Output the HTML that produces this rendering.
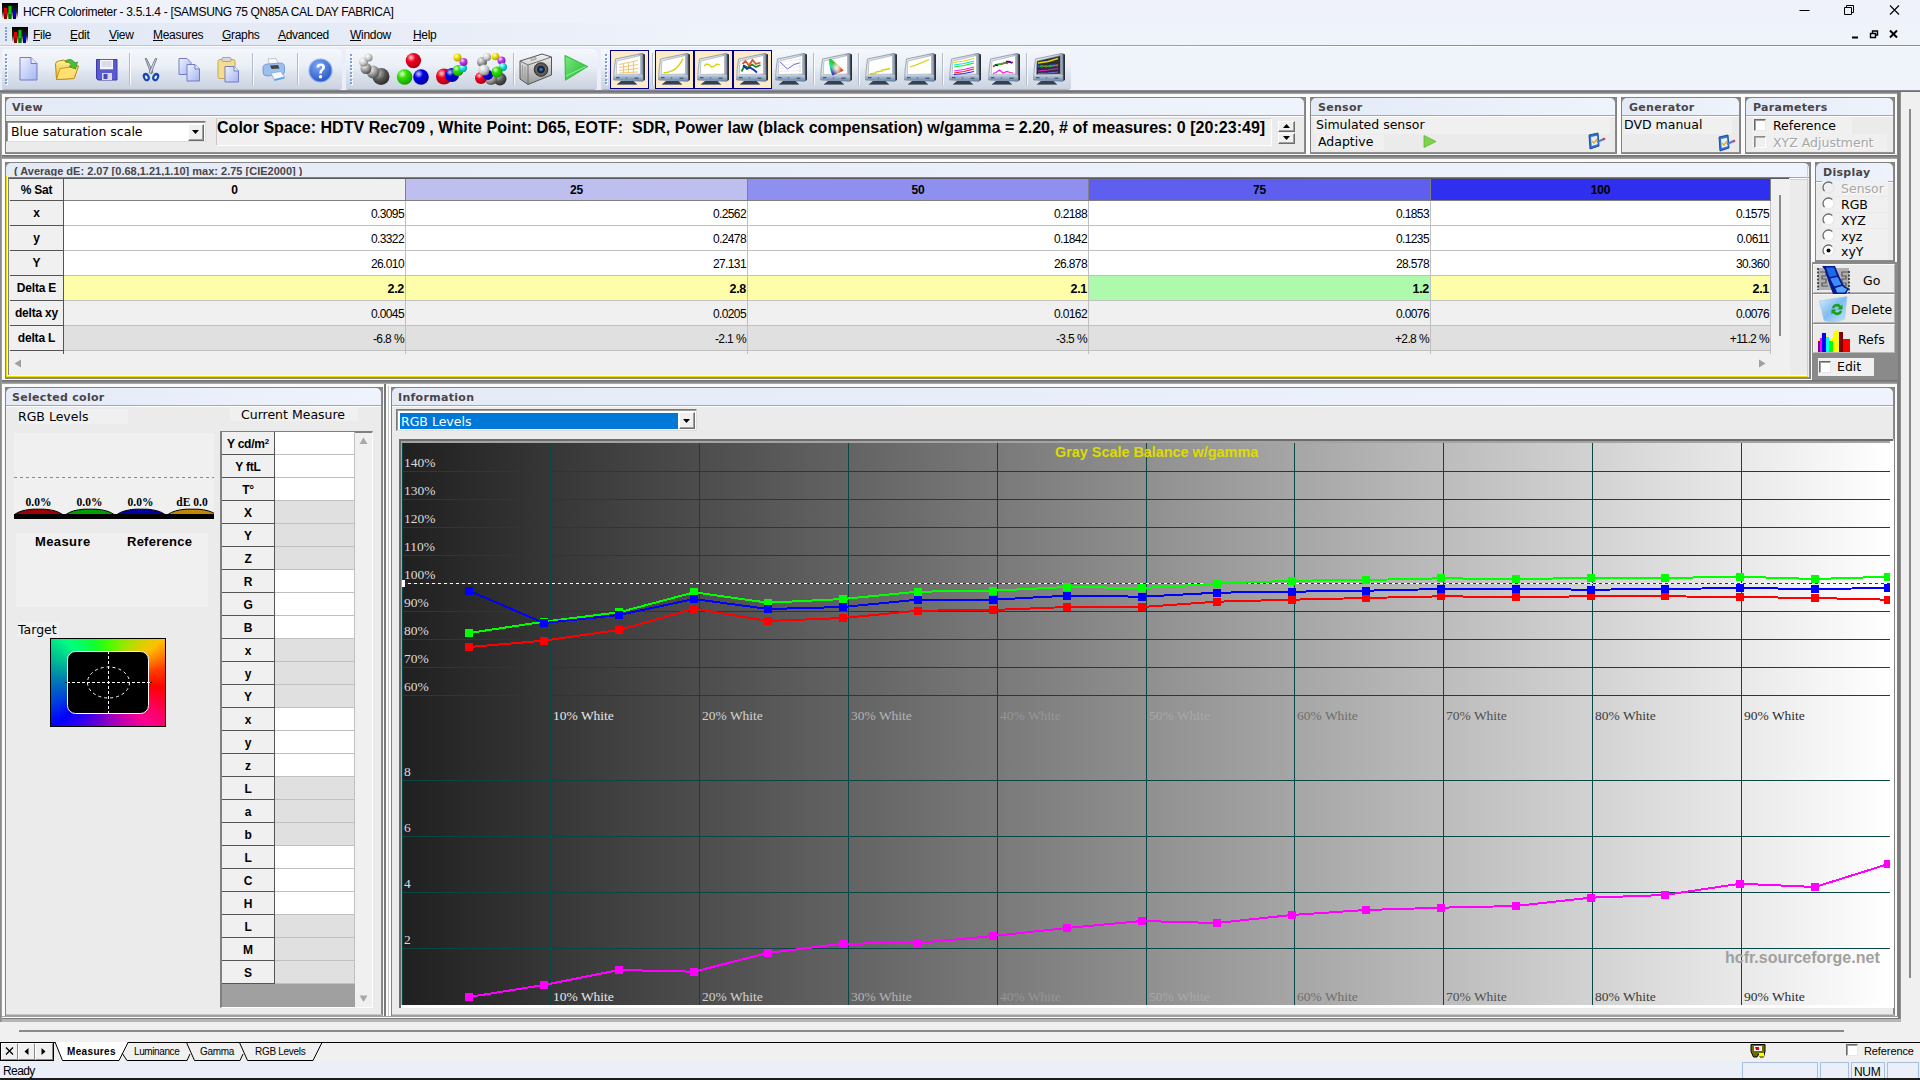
<!DOCTYPE html><html><head><meta charset="utf-8"><title>HCFR Colorimeter</title><style>
*{box-sizing:border-box;margin:0;padding:0}
html,body{width:1920px;height:1080px;overflow:hidden;background:#f0f0f0}
body{position:relative;font-family:"Liberation Sans",sans-serif;font-size:12px;color:#000}
.a{position:absolute}
.t{position:absolute;white-space:nowrap;line-height:1}
.ui{font-family:"Liberation Sans",sans-serif;font-size:12px;letter-spacing:-0.3px}
.th{font-family:"DejaVu Sans","Liberation Sans",sans-serif;font-size:12.5px}
.pt{font-family:"DejaVu Sans","Liberation Sans",sans-serif;font-weight:bold;font-size:11px;letter-spacing:0.3px;color:#4a4446}
.pnl{position:absolute;background:#838383}
.pnl .hd{position:absolute;left:1px;top:1px;right:2px;height:17px;background:linear-gradient(90deg,#e4ebf7,#eff3fb);border-radius:5px 5px 0 0}
.pnl .bd{position:absolute;left:1px;top:19px;right:2px;bottom:2px;background:#ebebeb;border-top:1px solid #a6a6a6;box-shadow:inset 0 1px 0 #fff}
.pnl .br{position:absolute;right:1px;top:1px;bottom:1px;width:1px;background:#8a8a8a}
.pnl .bb{position:absolute;left:1px;right:1px;bottom:1px;height:1px;background:#8f8f8f}
.hl{position:absolute;height:4px;background:linear-gradient(#6c6c6c,#8c8c8c 60%,#b0b0b0)}
.vl{position:absolute;width:3px;background:linear-gradient(90deg,#a8a8a8,#7c7c7c 50%,#8e8e8e)}
.cell{position:absolute;white-space:nowrap;overflow:hidden}
.serif{font-family:"Liberation Serif",serif}
</style></head><body>
<div class="a" style="left:0px;top:0px;width:1920px;height:23px;background:#eff2fa"></div>
<div class="a" style="left:0px;top:23px;width:1920px;height:23px;background:linear-gradient(90deg,#e3e9f5 0,#e5ebf6 320px,#eff3fa 720px)"></div>
<div class="a" style="left:0px;top:46px;width:1920px;height:45px;background:linear-gradient(90deg,#e8eef8 0,#eaeff9 600px,#eff3fa 1100px)"></div>
<div class="a" style="left:0px;top:45px;width:1920px;height:1px;background:linear-gradient(90deg,#c4cad6 0,#a8acb4 900px,#8e8e8e 1500px)"></div>
<div class="a" style="left:0px;top:46px;width:1920px;height:1px;background:#fafcff"></div>
<div class="a" style="left:0px;top:94px;width:1920px;height:948px;background:#fbfbfb"></div>
<svg class="a" style="left:2px;top:3px" width="16" height="16" viewBox="0 0 16 16"><defs><linearGradient id="ig2" x1="0" y1="0" x2="0" y2="1"><stop offset="0" stop-color="#000"/><stop offset=".55" stop-color="#222"/><stop offset="1" stop-color="#fff"/></linearGradient></defs><rect x="0" y="0" width="16" height="16" fill="url(#ig2)"/><rect x="2" y="5" width="3" height="11" fill="#e00000"/><rect x="2" y="11" width="3" height="5" fill="#900000"/><rect x="6.5" y="3" width="3" height="13" fill="#00c800"/><rect x="6.5" y="11" width="3" height="5" fill="#007000"/><rect x="11" y="6" width="3" height="10" fill="#0000e8"/><rect x="11" y="12" width="3" height="4" fill="#000090"/></svg>
<div class="t ui" style="left:23px;top:6px;letter-spacing:-0.32px">HCFR Colorimeter - 3.5.1.4 - [SAMSUNG 75 QN85A CAL DAY FABRICA]</div>
<svg class="a" style="left:1780px;top:0" width="140" height="46" viewBox="0 0 140 46"><path d="M19.5 10.5h10" stroke="#000" stroke-width="1" fill="none"/><path d="M64.5 7.500h7v7h-7z M66.500 7.500v-2h7v7h-2" stroke="#000" stroke-width="1" fill="none"/><path d="M110 5.500l9 9M119 5.500l-9 9" stroke="#000" stroke-width="1.1" fill="none"/><path d="M72 37.500h6" stroke="#000" stroke-width="2" fill="none"/><path d="M90.500 33.500h5v4h-5z M92.500 33v-2h5v4h-2" stroke="#000" stroke-width="1.4" fill="none"/><path d="M110 30.500l7 7M117 30.500l-7 7" stroke="#000" stroke-width="2" fill="none"/></svg>
<div class="a" style="left:5px;top:27px;width:2px;height:2px;background:#7f9fd0"></div>
<div class="a" style="left:5px;top:30px;width:2px;height:2px;background:#7f9fd0"></div>
<div class="a" style="left:5px;top:33px;width:2px;height:2px;background:#7f9fd0"></div>
<div class="a" style="left:5px;top:36px;width:2px;height:2px;background:#7f9fd0"></div>
<div class="a" style="left:5px;top:39px;width:2px;height:2px;background:#7f9fd0"></div>
<svg class="a" style="left:12px;top:27px" width="16" height="16" viewBox="0 0 16 16"><defs><linearGradient id="ig12" x1="0" y1="0" x2="0" y2="1"><stop offset="0" stop-color="#000"/><stop offset=".55" stop-color="#222"/><stop offset="1" stop-color="#fff"/></linearGradient></defs><rect x="0" y="0" width="16" height="16" fill="url(#ig12)"/><rect x="2" y="5" width="3" height="11" fill="#e00000"/><rect x="2" y="11" width="3" height="5" fill="#900000"/><rect x="6.5" y="3" width="3" height="13" fill="#00c800"/><rect x="6.5" y="11" width="3" height="5" fill="#007000"/><rect x="11" y="6" width="3" height="10" fill="#0000e8"/><rect x="11" y="12" width="3" height="4" fill="#000090"/></svg>
<div class="t ui" style="left:33px;top:29px;">File</div>
<div class="a" style="left:33px;top:40px;width:7px;height:1px;background:#000"></div>
<div class="t ui" style="left:70px;top:29px;">Edit</div>
<div class="a" style="left:70px;top:40px;width:7px;height:1px;background:#000"></div>
<div class="t ui" style="left:109px;top:29px;">View</div>
<div class="a" style="left:109px;top:40px;width:7.5px;height:1px;background:#000"></div>
<div class="t ui" style="left:153px;top:29px;">Measures</div>
<div class="a" style="left:153px;top:40px;width:10px;height:1px;background:#000"></div>
<div class="t ui" style="left:222px;top:29px;">Graphs</div>
<div class="a" style="left:222px;top:40px;width:9px;height:1px;background:#000"></div>
<div class="t ui" style="left:278px;top:29px;">Advanced</div>
<div class="a" style="left:278px;top:40px;width:7.5px;height:1px;background:#000"></div>
<div class="t ui" style="left:350px;top:29px;">Window</div>
<div class="a" style="left:350px;top:40px;width:11px;height:1px;background:#000"></div>
<div class="t ui" style="left:413px;top:29px;">Help</div>
<div class="a" style="left:413px;top:40px;width:8px;height:1px;background:#000"></div>
<div class="a" style="left:2px;top:49px;width:340px;height:40px;background:linear-gradient(#f4f7fb 0%,#eaeff6 45%,#dfe5ef 60%,#cbd3e0 100%);border-radius:2px 4px 4px 2px;box-shadow:0 1px 0 #aab4c4"></div>
<div class="a" style="left:5px;top:54.0px;width:2px;height:2px;background:#7f9fd2;box-shadow:1px 1px 0 #fff"></div>
<div class="a" style="left:5px;top:57.5px;width:2px;height:2px;background:#7f9fd2;box-shadow:1px 1px 0 #fff"></div>
<div class="a" style="left:5px;top:61.0px;width:2px;height:2px;background:#7f9fd2;box-shadow:1px 1px 0 #fff"></div>
<div class="a" style="left:5px;top:64.5px;width:2px;height:2px;background:#7f9fd2;box-shadow:1px 1px 0 #fff"></div>
<div class="a" style="left:5px;top:68.0px;width:2px;height:2px;background:#7f9fd2;box-shadow:1px 1px 0 #fff"></div>
<div class="a" style="left:5px;top:71.5px;width:2px;height:2px;background:#7f9fd2;box-shadow:1px 1px 0 #fff"></div>
<div class="a" style="left:5px;top:75.0px;width:2px;height:2px;background:#7f9fd2;box-shadow:1px 1px 0 #fff"></div>
<div class="a" style="left:5px;top:78.5px;width:2px;height:2px;background:#7f9fd2;box-shadow:1px 1px 0 #fff"></div>
<div class="a" style="left:5px;top:82.0px;width:2px;height:2px;background:#7f9fd2;box-shadow:1px 1px 0 #fff"></div>
<div class="a" style="left:346px;top:49px;width:251px;height:40px;background:linear-gradient(#f4f7fb 0%,#eaeff6 45%,#dfe5ef 60%,#cbd3e0 100%);border-radius:2px 4px 4px 2px;box-shadow:0 1px 0 #aab4c4"></div>
<div class="a" style="left:350px;top:54.0px;width:2px;height:2px;background:#7f9fd2;box-shadow:1px 1px 0 #fff"></div>
<div class="a" style="left:350px;top:57.5px;width:2px;height:2px;background:#7f9fd2;box-shadow:1px 1px 0 #fff"></div>
<div class="a" style="left:350px;top:61.0px;width:2px;height:2px;background:#7f9fd2;box-shadow:1px 1px 0 #fff"></div>
<div class="a" style="left:350px;top:64.5px;width:2px;height:2px;background:#7f9fd2;box-shadow:1px 1px 0 #fff"></div>
<div class="a" style="left:350px;top:68.0px;width:2px;height:2px;background:#7f9fd2;box-shadow:1px 1px 0 #fff"></div>
<div class="a" style="left:350px;top:71.5px;width:2px;height:2px;background:#7f9fd2;box-shadow:1px 1px 0 #fff"></div>
<div class="a" style="left:350px;top:75.0px;width:2px;height:2px;background:#7f9fd2;box-shadow:1px 1px 0 #fff"></div>
<div class="a" style="left:350px;top:78.5px;width:2px;height:2px;background:#7f9fd2;box-shadow:1px 1px 0 #fff"></div>
<div class="a" style="left:350px;top:82.0px;width:2px;height:2px;background:#7f9fd2;box-shadow:1px 1px 0 #fff"></div>
<div class="a" style="left:601px;top:49px;width:470px;height:40px;background:linear-gradient(#f4f7fb 0%,#eaeff6 45%,#dfe5ef 60%,#cbd3e0 100%);border-radius:2px 4px 4px 2px;box-shadow:0 1px 0 #aab4c4"></div>
<div class="a" style="left:605px;top:54.0px;width:2px;height:2px;background:#7f9fd2;box-shadow:1px 1px 0 #fff"></div>
<div class="a" style="left:605px;top:57.5px;width:2px;height:2px;background:#7f9fd2;box-shadow:1px 1px 0 #fff"></div>
<div class="a" style="left:605px;top:61.0px;width:2px;height:2px;background:#7f9fd2;box-shadow:1px 1px 0 #fff"></div>
<div class="a" style="left:605px;top:64.5px;width:2px;height:2px;background:#7f9fd2;box-shadow:1px 1px 0 #fff"></div>
<div class="a" style="left:605px;top:68.0px;width:2px;height:2px;background:#7f9fd2;box-shadow:1px 1px 0 #fff"></div>
<div class="a" style="left:605px;top:71.5px;width:2px;height:2px;background:#7f9fd2;box-shadow:1px 1px 0 #fff"></div>
<div class="a" style="left:605px;top:75.0px;width:2px;height:2px;background:#7f9fd2;box-shadow:1px 1px 0 #fff"></div>
<div class="a" style="left:605px;top:78.5px;width:2px;height:2px;background:#7f9fd2;box-shadow:1px 1px 0 #fff"></div>
<div class="a" style="left:605px;top:82.0px;width:2px;height:2px;background:#7f9fd2;box-shadow:1px 1px 0 #fff"></div>
<div class="a" style="left:129px;top:53px;width:1px;height:32px;background:#b4bccb;box-shadow:1px 0 0 #fafbfd"></div>
<div class="a" style="left:252px;top:53px;width:1px;height:32px;background:#b4bccb;box-shadow:1px 0 0 #fafbfd"></div>
<div class="a" style="left:297px;top:53px;width:1px;height:32px;background:#b4bccb;box-shadow:1px 0 0 #fafbfd"></div>
<div class="a" style="left:513px;top:53px;width:1px;height:32px;background:#b4bccb;box-shadow:1px 0 0 #fafbfd"></div>
<div class="a" style="left:652px;top:53px;width:1px;height:32px;background:#b4bccb;box-shadow:1px 0 0 #fafbfd"></div>
<div class="a" style="left:813px;top:53px;width:1px;height:32px;background:#b4bccb;box-shadow:1px 0 0 #fafbfd"></div>
<div class="a" style="left:858px;top:53px;width:1px;height:32px;background:#b4bccb;box-shadow:1px 0 0 #fafbfd"></div>
<div class="a" style="left:942px;top:53px;width:1px;height:32px;background:#b4bccb;box-shadow:1px 0 0 #fafbfd"></div>
<div class="a" style="left:1026px;top:53px;width:1px;height:32px;background:#b4bccb;box-shadow:1px 0 0 #fafbfd"></div>
<svg class="a" width="0" height="0"><defs><linearGradient id="gdoc" x1="0" y1="0" x2="1" y2="1"><stop offset="0" stop-color="#f0f3ff"/><stop offset="1" stop-color="#a4b4f0"/></linearGradient><linearGradient id="gfold" x1="0" y1="0" x2="0" y2="1"><stop offset="0" stop-color="#fff3a0"/><stop offset="1" stop-color="#e8b020"/></linearGradient><radialGradient id="bgray" cx=".35" cy=".3" r=".8"><stop offset="0" stop-color="#f4f4f4"/><stop offset=".5" stop-color="#9a9a9a"/><stop offset="1" stop-color="#3c3c3c"/></radialGradient><radialGradient id="bdk" cx=".35" cy=".3" r=".8"><stop offset="0" stop-color="#bbb"/><stop offset=".5" stop-color="#555"/><stop offset="1" stop-color="#222"/></radialGradient><radialGradient id="bred" cx=".35" cy=".3" r=".8"><stop offset="0" stop-color="#ffd0d0"/><stop offset=".35" stop-color="#f00020"/><stop offset="1" stop-color="#a00010"/></radialGradient><radialGradient id="bgrn" cx=".35" cy=".3" r=".8"><stop offset="0" stop-color="#e0ffd0"/><stop offset=".35" stop-color="#30e000"/><stop offset="1" stop-color="#109000"/></radialGradient><radialGradient id="bblu" cx=".35" cy=".3" r=".8"><stop offset="0" stop-color="#d0d0ff"/><stop offset=".35" stop-color="#0000e8"/><stop offset="1" stop-color="#000090"/></radialGradient><radialGradient id="byel" cx=".35" cy=".3" r=".8"><stop offset="0" stop-color="#ffffd0"/><stop offset=".4" stop-color="#f0e000"/><stop offset="1" stop-color="#a09000"/></radialGradient><radialGradient id="bmag" cx=".35" cy=".3" r=".8"><stop offset="0" stop-color="#ffe0ff"/><stop offset=".4" stop-color="#c040e0"/><stop offset="1" stop-color="#7010a0"/></radialGradient><radialGradient id="bcya" cx=".35" cy=".3" r=".8"><stop offset="0" stop-color="#e0ffff"/><stop offset=".4" stop-color="#20e0e0"/><stop offset="1" stop-color="#009090"/></radialGradient><radialGradient id="bwht" cx=".35" cy=".3" r=".8"><stop offset="0" stop-color="#fff"/><stop offset=".55" stop-color="#c8c8c8"/><stop offset="1" stop-color="#6a6a6a"/></radialGradient><linearGradient id="gmon" x1="0" y1="0" x2="1" y2="0"><stop offset="0" stop-color="#e4e9ef"/><stop offset=".8" stop-color="#cfd7e1"/><stop offset="1" stop-color="#8e9aac"/></linearGradient><linearGradient id="gchin" x1="0" y1="0" x2="0" y2="1"><stop offset="0" stop-color="#c2d0e2"/><stop offset="1" stop-color="#6482a8"/></linearGradient><linearGradient id="gmons" x1="0" y1="0" x2="1" y2="0"><stop offset="0" stop-color="#5a6270"/><stop offset="1" stop-color="#1e2228"/></linearGradient><linearGradient id="gcam" x1="0" y1="0" x2="0" y2="1"><stop offset="0" stop-color="#f4f4f4"/><stop offset="1" stop-color="#9a9a9a"/></linearGradient><linearGradient id="gplay" x1="0" y1="0" x2="1" y2="1"><stop offset="0" stop-color="#7fe87f"/><stop offset="1" stop-color="#18b830"/></linearGradient><radialGradient id="ghelp" cx=".4" cy=".3" r=".8"><stop offset="0" stop-color="#7fa8f4"/><stop offset="1" stop-color="#1c4cc0"/></radialGradient></defs></svg>
<svg class="a" style="left:19px;top:57px" width="19" height="24" viewBox="0 0 19 24"><path d="M1 0.500h11l6 6v16.500h-17z" fill="url(#gdoc)" stroke="#707cc6" stroke-width="1"/><path d="M12 0.500v6h6" fill="#e6eaff" stroke="#707cc6" stroke-width="1"/></svg>
<svg class="a" style="left:54px;top:58px" width="26" height="23" viewBox="0 0 26 23"><path d="M1.500 6 Q2 3 5 3 L10 2 L12 4.500 L20 3.500 L21 8 L24.500 8 L20 20.500 L2.500 21.500z" fill="url(#gfold)" stroke="#b88a10" stroke-width="1"/><path d="M2.500 21.500 L6 10.500 L24.500 8 L20 20.500z" fill="#ffe070" stroke="#b88a10" stroke-width=".8"/><path d="M11 3 Q17 -1 21 5 L23.500 4 L21.500 11 L15 8.500 L17.500 7 Q15 3.500 11 3z" fill="#48c038" stroke="#2a8a20" stroke-width=".7"/></svg>
<svg class="a" style="left:96px;top:59px" width="22" height="22" viewBox="0 0 22 22"><path d="M0.500 0.500h20.500v20.500h-19l-1.500-1.500z" fill="#5a5ad0" stroke="#3a3aa8" stroke-width="1"/><rect x="4" y="0.800" width="13" height="9.500" fill="#f4f4fa"/><path d="M5.500 3h10M5.500 5h10M5.500 7h10" stroke="#b8b8c8" stroke-width=".8"/><rect x="6" y="14" width="10" height="7" fill="#d8d8e4"/><rect x="7.500" y="15" width="4" height="5" fill="#4848b8"/></svg>
<svg class="a" style="left:142px;top:58px" width="18" height="24" viewBox="0 0 18 24"><path d="M3.200 0.500 L4.600 0.500 L11 14.500 L9 15.500z" fill="#c8ccd6" stroke="#505868" stroke-width=".7"/><path d="M14.800 0.500 L13.400 0.500 L7 14.500 L9 15.500z" fill="#e0e4ea" stroke="#505868" stroke-width=".7"/><ellipse cx="4.300" cy="19" rx="3.300" ry="4.300" fill="#1448b8" transform="rotate(-25 4.300 19)"/><ellipse cx="4.300" cy="19.300" rx="1.200" ry="2" fill="#e8eef8" transform="rotate(-25 4.300 19.300)"/><ellipse cx="13.700" cy="19" rx="3.300" ry="4.300" fill="#1448b8" transform="rotate(25 13.700 19)"/><ellipse cx="13.700" cy="19.300" rx="1.200" ry="2" fill="#e8eef8" transform="rotate(25 13.700 19.300)"/></svg>
<svg class="a" style="left:178px;top:58px" width="23" height="24" viewBox="0 0 23 24"><path d="M1 0.500h8l4 4v12h-12z" fill="url(#gdoc)" stroke="#707cc6" stroke-width="1"/><path d="M9 6.500h8l4.500 4.500v12h-12.500z" fill="url(#gdoc)" stroke="#707cc6" stroke-width="1"/><path d="M17 6.500v4.500h4.500" fill="#e6eaff" stroke="#707cc6" stroke-width="1"/></svg>
<svg class="a" style="left:217px;top:57px" width="23" height="26" viewBox="0 0 23 26"><rect x="1" y="2.500" width="17" height="19" rx="2" fill="#f4dc90" stroke="#c8a848" stroke-width="1"/><rect x="5" y="0.500" width="9" height="4" rx="1" fill="#d8d8d8" stroke="#999" stroke-width=".8"/><path d="M8 9.500h9l4.500 4.500v11h-13.500z" fill="url(#gdoc)" stroke="#707cc6" stroke-width="1"/><path d="M17 9.500v4.500h4.500" fill="#e6eaff" stroke="#707cc6" stroke-width="1"/></svg>
<svg class="a" style="left:262px;top:58px" width="24" height="24" viewBox="0 0 24 24"><path d="M6 1 L14 0.500 L17 7 L8 8z" fill="#fff" stroke="#a8b8d8" stroke-width=".8"/><path d="M1 10 Q1 6 6 6 L18 5 Q22.500 5 22.500 9 L22.500 14 Q22 17 18 17 L5 18 Q1 18 1 14z" fill="#9cc0ee" stroke="#6a90cc" stroke-width=".8"/><path d="M8 7.500 L16 7 L17.500 10.500 L9.500 11z" fill="#444"/><path d="M9 15 L19 13.500 L22.500 19 L12 21.500z" fill="#f4f8ff" stroke="#88a8d8" stroke-width=".8"/><path d="M12 21.500 L22.500 19 L22.500 20.500 L12.500 23z" fill="#58a0e8"/></svg>
<svg class="a" style="left:308px;top:58px" width="25" height="25" viewBox="0 0 25 25"><circle cx="12.500" cy="12.500" r="11.500" fill="url(#ghelp)" stroke="#8fb0ee" stroke-width="1.200"/><path d="M8.500 9.500 Q8.500 5.500 12.700 5.500 Q17 5.500 17 9.300 Q17 11.500 14.800 12.800 Q13.800 13.500 13.800 15.500 L11.200 15.500 Q11.200 12.500 13 11.300 Q14.200 10.500 14.200 9.400 Q14.200 7.800 12.700 7.800 Q11.200 7.800 11.200 9.500z" fill="#fff"/><circle cx="12.500" cy="18.700" r="1.700" fill="#fff"/></svg>
<svg class="a" style="left:357px;top:53px" width="34" height="33" viewBox="0 0 34 33"><circle cx="24" cy="23.500" r="8.500" fill="url(#bdk)"/><circle cx="16" cy="19" r="6.500" fill="url(#bgray)"/><circle cx="9" cy="15.500" r="5.500" fill="url(#bgray)"/><circle cx="6.500" cy="9" r="4.500" fill="url(#bwht)"/><circle cx="11.500" cy="4.500" r="4" fill="url(#bwht)"/></svg>
<svg class="a" style="left:396px;top:52px" width="34" height="34" viewBox="0 0 34 34"><circle cx="17.400" cy="8.600" r="7.700" fill="url(#bred)"/><circle cx="8.600" cy="25" r="7.800" fill="url(#bgrn)"/><circle cx="25" cy="25" r="7.800" fill="url(#bblu)"/></svg>
<svg class="a" style="left:435px;top:53px" width="34" height="33" viewBox="0 0 34 33"><circle cx="9" cy="23.500" r="8" fill="url(#bred)"/><circle cx="17" cy="22" r="7" fill="url(#bblu)"/><circle cx="23" cy="17.500" r="5.500" fill="url(#bgrn)"/><circle cx="28" cy="15" r="4.200" fill="url(#bcya)"/><circle cx="28.500" cy="9" r="4" fill="url(#bmag)"/><circle cx="22.500" cy="4.500" r="4" fill="url(#byel)"/></svg>
<svg class="a" style="left:475px;top:53px" width="34" height="33" viewBox="0 0 34 33"><circle cx="25" cy="26" r="6.500" fill="url(#bdk)"/><circle cx="16" cy="26" r="6" fill="url(#bgray)"/><circle cx="6" cy="25" r="6" fill="url(#bred)"/><circle cx="13" cy="22" r="5" fill="url(#bblu)"/><circle cx="7" cy="9" r="5" fill="url(#bgray)"/><circle cx="9" cy="17" r="5.500" fill="url(#bwht)"/><circle cx="12" cy="4" r="4" fill="url(#bwht)"/><circle cx="20.500" cy="3.500" r="3.800" fill="url(#byel)"/><circle cx="26.500" cy="7.500" r="4" fill="url(#bmag)"/><circle cx="28" cy="14" r="4.200" fill="url(#bcya)"/><circle cx="22" cy="19" r="5.500" fill="url(#bgrn)"/></svg>
<svg class="a" style="left:519px;top:53px" width="34" height="32" viewBox="0 0 34 32"><path d="M1 8 L20 2 L23 1 L28 2.500 L32.500 4 L32.500 22 L9 31.500 L1 26z" fill="url(#gcam)" stroke="#555" stroke-width="1"/><path d="M1 8 L9 12 L9 31.500 M9 12 L32.500 4" fill="none" stroke="#666" stroke-width=".9"/><path d="M3.500 12v13M6 13.500v13" stroke="#999" stroke-width=".9"/><circle cx="22" cy="16.500" r="6.800" fill="#555" stroke="#333" stroke-width="1"/><circle cx="22" cy="16.500" r="4.500" fill="#222" stroke="#888" stroke-width=".8"/><circle cx="22" cy="16.500" r="1.800" fill="#2070e0"/><rect x="12" y="4.500" width="5" height="2.500" fill="#ccc" stroke="#777" stroke-width=".5" transform="rotate(-16 14 6)"/></svg>
<svg class="a" style="left:563px;top:54px" width="26" height="28" viewBox="0 0 26 28"><path d="M2 1.500 L24.500 12.500 L2.500 26z" fill="url(#gplay)" stroke="#38c048" stroke-width="1.200" stroke-linejoin="round"/><path d="M3 22 L23 12.500" stroke="#b8f4b8" stroke-width="1" opacity=".8"/></svg>
<div class="a" style="left:610px;top:50px;width:39px;height:39px;background:#fdebc8;border:1px solid #00008b"></div>
<svg class="a" style="left:613px;top:53px" width="32" height="32" viewBox="0 0 32 32"><path d="M29.400 0.300 L32 1.600 L32 27 L29.800 28.300z" fill="url(#gmons)"/><path d="M2.500 6 L29.400 0.300 L29.800 28.300 L0.600 27 Q0.800 16 2.500 6z" fill="url(#gmon)" stroke="#7a8798" stroke-width=".7"/><path d="M1 22.300 L29.700 22 L29.800 28.300 L0.600 27z" fill="url(#gchin)"/><path d="M4 8 L27.500 2.500 L27.500 21 L3.300 21.500 Q3.400 14 4 8z" fill="#fff" stroke="#98a4b4" stroke-width=".6"/><rect x="3" y="24" width="3.500" height="1.300" fill="#4a5a70"/><rect x="21.500" y="24.600" width="4" height="1.300" fill="#4a5a70"/><circle cx="13.500" cy="25" r=".8" fill="#5a6a80"/><path d="M8 28 L20.500 28 L24 31.300 L4 31.300z" fill="#36404e"/><path d="M4 31.300h20v.7h-20z" fill="#5a6472"/><g stroke="#f0c878" stroke-width="1.100" fill="none"><path d="M6 11.500 L25 7.500M6 14.500 L25 11.500M6 17.500 L25 15.500M6 20 L25 19"/><path d="M10.500 10v10.500M15.500 9v11.500M20.500 8v12.500"/></g></svg>
<div class="a" style="left:655px;top:50px;width:39px;height:39px;background:#fdebc8;border:1px solid #00008b"></div>
<svg class="a" style="left:658px;top:53px" width="32" height="32" viewBox="0 0 32 32"><path d="M29.400 0.300 L32 1.600 L32 27 L29.800 28.300z" fill="url(#gmons)"/><path d="M2.500 6 L29.400 0.300 L29.800 28.300 L0.600 27 Q0.800 16 2.500 6z" fill="url(#gmon)" stroke="#7a8798" stroke-width=".7"/><path d="M1 22.300 L29.700 22 L29.800 28.300 L0.600 27z" fill="url(#gchin)"/><path d="M4 8 L27.500 2.500 L27.500 21 L3.300 21.500 Q3.400 14 4 8z" fill="#fff" stroke="#98a4b4" stroke-width=".6"/><rect x="3" y="24" width="3.500" height="1.300" fill="#4a5a70"/><rect x="21.500" y="24.600" width="4" height="1.300" fill="#4a5a70"/><circle cx="13.500" cy="25" r=".8" fill="#5a6a80"/><path d="M8 28 L20.500 28 L24 31.300 L4 31.300z" fill="#36404e"/><path d="M4 31.300h20v.7h-20z" fill="#5a6472"/><path d="M5.500 20 Q16 19 21 12 Q24 8 25 5.500" stroke="#d8d000" stroke-width="1.300" fill="none"/></svg>
<div class="a" style="left:694px;top:50px;width:39px;height:39px;background:#fdebc8;border:1px solid #00008b"></div>
<svg class="a" style="left:697px;top:53px" width="32" height="32" viewBox="0 0 32 32"><path d="M29.400 0.300 L32 1.600 L32 27 L29.800 28.300z" fill="url(#gmons)"/><path d="M2.500 6 L29.400 0.300 L29.800 28.300 L0.600 27 Q0.800 16 2.500 6z" fill="url(#gmon)" stroke="#7a8798" stroke-width=".7"/><path d="M1 22.300 L29.700 22 L29.800 28.300 L0.600 27z" fill="url(#gchin)"/><path d="M4 8 L27.500 2.500 L27.500 21 L3.300 21.500 Q3.400 14 4 8z" fill="#fff" stroke="#98a4b4" stroke-width=".6"/><rect x="3" y="24" width="3.500" height="1.300" fill="#4a5a70"/><rect x="21.500" y="24.600" width="4" height="1.300" fill="#4a5a70"/><circle cx="13.500" cy="25" r=".8" fill="#5a6a80"/><path d="M8 28 L20.500 28 L24 31.300 L4 31.300z" fill="#36404e"/><path d="M4 31.300h20v.7h-20z" fill="#5a6472"/><path d="M7 13 L9.500 11 L12 11.500 L14.500 14 L17 13.500 L20 11 L23 12" stroke="#d8d000" stroke-width="1.300" fill="none"/></svg>
<div class="a" style="left:733px;top:50px;width:39px;height:39px;background:#fdebc8;border:1px solid #00008b"></div>
<svg class="a" style="left:736px;top:53px" width="32" height="32" viewBox="0 0 32 32"><path d="M29.400 0.300 L32 1.600 L32 27 L29.800 28.300z" fill="url(#gmons)"/><path d="M2.500 6 L29.400 0.300 L29.800 28.300 L0.600 27 Q0.800 16 2.500 6z" fill="url(#gmon)" stroke="#7a8798" stroke-width=".7"/><path d="M1 22.300 L29.700 22 L29.800 28.300 L0.600 27z" fill="url(#gchin)"/><path d="M4 8 L27.500 2.500 L27.500 21 L3.300 21.500 Q3.400 14 4 8z" fill="#fff" stroke="#98a4b4" stroke-width=".6"/><rect x="3" y="24" width="3.500" height="1.300" fill="#4a5a70"/><rect x="21.500" y="24.600" width="4" height="1.300" fill="#4a5a70"/><circle cx="13.500" cy="25" r=".8" fill="#5a6a80"/><path d="M8 28 L20.500 28 L24 31.300 L4 31.300z" fill="#36404e"/><path d="M4 31.300h20v.7h-20z" fill="#5a6472"/><path d="M5.500 18.500 L8.500 13 L12 14.500 L16 11.500 L20 14 L24.500 12" stroke="#109020" stroke-width="1.800" fill="none"/><path d="M6.500 11 L9.500 8 L13 12.500 L16.500 7 L20 11 L24.500 9.500" stroke="#e85020" stroke-width="1.800" fill="none"/><path d="M7 12.500 L11 16 L14 14.500 L18 17 L21 19.500" stroke="#1030b0" stroke-width="1.800" fill="none"/></svg>
<svg class="a" style="left:775px;top:53px" width="32" height="32" viewBox="0 0 32 32"><path d="M29.400 0.300 L32 1.600 L32 27 L29.800 28.300z" fill="url(#gmons)"/><path d="M2.500 6 L29.400 0.300 L29.800 28.300 L0.600 27 Q0.800 16 2.500 6z" fill="url(#gmon)" stroke="#7a8798" stroke-width=".7"/><path d="M1 22.300 L29.700 22 L29.800 28.300 L0.600 27z" fill="url(#gchin)"/><path d="M4 8 L27.500 2.500 L27.500 21 L3.300 21.500 Q3.400 14 4 8z" fill="#fff" stroke="#98a4b4" stroke-width=".6"/><rect x="3" y="24" width="3.500" height="1.300" fill="#4a5a70"/><rect x="21.500" y="24.600" width="4" height="1.300" fill="#4a5a70"/><circle cx="13.500" cy="25" r=".8" fill="#5a6a80"/><path d="M8 28 L20.500 28 L24 31.300 L4 31.300z" fill="#36404e"/><path d="M4 31.300h20v.7h-20z" fill="#5a6472"/><path d="M5 9.500 L26 5.500M5 12.500 L26 9.500M5 15.500 L26 13.500M5 18.500 L26 17.500" stroke="#e4e4e4" stroke-width=".6"/><path d="M5 9 L12.500 16 L19 11.500 L24.500 10" stroke="#7a6ad8" stroke-width="1" fill="none"/><path d="M25 6v14" stroke="#7ad870" stroke-width=".7" stroke-dasharray="1 1"/></svg>
<svg class="a" style="left:820px;top:53px" width="32" height="32" viewBox="0 0 32 32"><path d="M29.400 0.300 L32 1.600 L32 27 L29.800 28.300z" fill="url(#gmons)"/><path d="M2.500 6 L29.400 0.300 L29.800 28.300 L0.600 27 Q0.800 16 2.500 6z" fill="url(#gmon)" stroke="#7a8798" stroke-width=".7"/><path d="M1 22.300 L29.700 22 L29.800 28.300 L0.600 27z" fill="url(#gchin)"/><path d="M4 8 L27.500 2.500 L27.500 21 L3.300 21.500 Q3.400 14 4 8z" fill="#fff" stroke="#98a4b4" stroke-width=".6"/><rect x="3" y="24" width="3.500" height="1.300" fill="#4a5a70"/><rect x="21.500" y="24.600" width="4" height="1.300" fill="#4a5a70"/><circle cx="13.500" cy="25" r=".8" fill="#5a6a80"/><path d="M8 28 L20.500 28 L24 31.300 L4 31.300z" fill="#36404e"/><path d="M4 31.300h20v.7h-20z" fill="#5a6472"/><defs><linearGradient id="cie1" x1="0" y1="0" x2="0" y2="1"><stop offset="0" stop-color="#00e000"/><stop offset=".45" stop-color="#20e8a0"/><stop offset="1" stop-color="#1818ff"/></linearGradient><linearGradient id="cie2" x1="0" y1="0" x2="1" y2="0"><stop offset=".15" stop-color="#ff0000" stop-opacity="0"/><stop offset=".6" stop-color="#ffb040" stop-opacity=".75"/><stop offset="1" stop-color="#ff0000"/></linearGradient><radialGradient id="cie3" cx=".5" cy=".55" r=".35"><stop offset="0" stop-color="#fff" stop-opacity=".95"/><stop offset="1" stop-color="#fff" stop-opacity="0"/></radialGradient></defs><path d="M9 6 Q11 5 13 7.500 L23.500 17.500 L12.500 22.500 Q9 16 9 6z" fill="url(#cie1)"/><path d="M9 6 Q11 5 13 7.500 L23.500 17.500 L12.500 22.500 Q9 16 9 6z" fill="url(#cie2)"/><path d="M9 6 Q11 5 13 7.500 L23.500 17.500 L12.500 22.500 Q9 16 9 6z" fill="url(#cie3)"/></svg>
<svg class="a" style="left:865px;top:53px" width="32" height="32" viewBox="0 0 32 32"><path d="M29.400 0.300 L32 1.600 L32 27 L29.800 28.300z" fill="url(#gmons)"/><path d="M2.500 6 L29.400 0.300 L29.800 28.300 L0.600 27 Q0.800 16 2.500 6z" fill="url(#gmon)" stroke="#7a8798" stroke-width=".7"/><path d="M1 22.300 L29.700 22 L29.800 28.300 L0.600 27z" fill="url(#gchin)"/><path d="M4 8 L27.500 2.500 L27.500 21 L3.300 21.500 Q3.400 14 4 8z" fill="#fff" stroke="#98a4b4" stroke-width=".6"/><rect x="3" y="24" width="3.500" height="1.300" fill="#4a5a70"/><rect x="21.500" y="24.600" width="4" height="1.300" fill="#4a5a70"/><circle cx="13.500" cy="25" r=".8" fill="#5a6a80"/><path d="M8 28 L20.500 28 L24 31.300 L4 31.300z" fill="#36404e"/><path d="M4 31.300h20v.7h-20z" fill="#5a6472"/><path d="M5 21 L11 20 L11 19 L17 18 L17 17 L23 16 L25 15.500" stroke="#d8d000" stroke-width="1.300" fill="none"/></svg>
<svg class="a" style="left:904px;top:53px" width="32" height="32" viewBox="0 0 32 32"><path d="M29.400 0.300 L32 1.600 L32 27 L29.800 28.300z" fill="url(#gmons)"/><path d="M2.500 6 L29.400 0.300 L29.800 28.300 L0.600 27 Q0.800 16 2.500 6z" fill="url(#gmon)" stroke="#7a8798" stroke-width=".7"/><path d="M1 22.300 L29.700 22 L29.800 28.300 L0.600 27z" fill="url(#gchin)"/><path d="M4 8 L27.500 2.500 L27.500 21 L3.300 21.500 Q3.400 14 4 8z" fill="#fff" stroke="#98a4b4" stroke-width=".6"/><rect x="3" y="24" width="3.500" height="1.300" fill="#4a5a70"/><rect x="21.500" y="24.600" width="4" height="1.300" fill="#4a5a70"/><circle cx="13.500" cy="25" r=".8" fill="#5a6a80"/><path d="M8 28 L20.500 28 L24 31.300 L4 31.300z" fill="#36404e"/><path d="M4 31.300h20v.7h-20z" fill="#5a6472"/><path d="M6 14 L12 12 L18 9.500 L25 6.500" stroke="#d8d000" stroke-width="1.300" fill="none"/></svg>
<svg class="a" style="left:949px;top:53px" width="32" height="32" viewBox="0 0 32 32"><path d="M29.400 0.300 L32 1.600 L32 27 L29.800 28.300z" fill="url(#gmons)"/><path d="M2.500 6 L29.400 0.300 L29.800 28.300 L0.600 27 Q0.800 16 2.500 6z" fill="url(#gmon)" stroke="#7a8798" stroke-width=".7"/><path d="M1 22.300 L29.700 22 L29.800 28.300 L0.600 27z" fill="url(#gchin)"/><path d="M4 8 L27.500 2.500 L27.500 21 L3.300 21.500 Q3.400 14 4 8z" fill="#fff" stroke="#98a4b4" stroke-width=".6"/><rect x="3" y="24" width="3.500" height="1.300" fill="#4a5a70"/><rect x="21.500" y="24.600" width="4" height="1.300" fill="#4a5a70"/><circle cx="13.500" cy="25" r=".8" fill="#5a6a80"/><path d="M8 28 L20.500 28 L24 31.300 L4 31.300z" fill="#36404e"/><path d="M4 31.300h20v.7h-20z" fill="#5a6472"/><g fill="none" stroke-width="1.100"><path d="M5 9.500 L15 8 L25 5.500" stroke="#e8d800"/><path d="M5 12 L15 10.500 L25 8" stroke="#00e8e8"/><path d="M5 14 L15 12.500 L25 10" stroke="#20e020"/><path d="M5 18 L15 16.500 L25 14" stroke="#f020e0"/><path d="M5 20 L15 18.500 L25 16" stroke="#f02020"/><path d="M5 21.500 L15 20.500 L25 18.500" stroke="#2020f0"/></g></svg>
<svg class="a" style="left:988px;top:53px" width="32" height="32" viewBox="0 0 32 32"><path d="M29.400 0.300 L32 1.600 L32 27 L29.800 28.300z" fill="url(#gmons)"/><path d="M2.500 6 L29.400 0.300 L29.800 28.300 L0.600 27 Q0.800 16 2.500 6z" fill="url(#gmon)" stroke="#7a8798" stroke-width=".7"/><path d="M1 22.300 L29.700 22 L29.800 28.300 L0.600 27z" fill="url(#gchin)"/><path d="M4 8 L27.500 2.500 L27.500 21 L3.300 21.500 Q3.400 14 4 8z" fill="#fff" stroke="#98a4b4" stroke-width=".6"/><rect x="3" y="24" width="3.500" height="1.300" fill="#4a5a70"/><rect x="21.500" y="24.600" width="4" height="1.300" fill="#4a5a70"/><circle cx="13.500" cy="25" r=".8" fill="#5a6a80"/><path d="M8 28 L20.500 28 L24 31.300 L4 31.300z" fill="#36404e"/><path d="M4 31.300h20v.7h-20z" fill="#5a6472"/><g fill="none" stroke-width="1.500"><path d="M5 13.500 L9 11.500 L14 11 L19 9 L25 9.500" stroke="#f01010"/><path d="M6 12.500 L11 11.500 L16 10 L20 10.500" stroke="#10c010"/><path d="M7 12 L10 12.500 M18 8.500 L21 8.500 L24 10" stroke="#1010f0"/><path d="M5 20.500 L8 19.500 L11.500 17 L15 20 L19 18.500 L22 19.500 L25 20" stroke="#f020e0" stroke-width="1.200"/></g></svg>
<svg class="a" style="left:1033px;top:53px" width="32" height="32" viewBox="0 0 32 32"><path d="M29.400 0.300 L32 1.600 L32 27 L29.800 28.300z" fill="url(#gmons)"/><path d="M2.500 6 L29.400 0.300 L29.800 28.300 L0.600 27 Q0.800 16 2.500 6z" fill="url(#gmon)" stroke="#7a8798" stroke-width=".7"/><path d="M1 22.300 L29.700 22 L29.800 28.300 L0.600 27z" fill="url(#gchin)"/><path d="M4 8 L27.500 2.500 L27.500 21 L3.300 21.500 Q3.400 14 4 8z" fill="#2a2e38" stroke="#98a4b4" stroke-width=".6"/><rect x="3" y="24" width="3.500" height="1.300" fill="#4a5a70"/><rect x="21.500" y="24.600" width="4" height="1.300" fill="#4a5a70"/><circle cx="13.500" cy="25" r=".8" fill="#5a6a80"/><path d="M8 28 L20.500 28 L24 31.300 L4 31.300z" fill="#36404e"/><path d="M4 31.300h20v.7h-20z" fill="#5a6472"/><g fill="none" stroke-width="1.100"><path d="M5 10 L15 8.500 L25 5.500" stroke="#e8d800" stroke-width="1.400"/><path d="M5 14 L9 12.500 L13 14 L17 12.500 L21 13 L25 11.500" stroke="#e87020"/><path d="M5 13 L9 14 L13 12.500 L17 14 L21 12 L25 13" stroke="#20c040"/><path d="M5 13.500 L25 11" stroke="#2050e0" stroke-dasharray="2 2"/><path d="M5 18 L15 17 L25 15.500" stroke="#f020e0"/><path d="M5 20.500 L15 20 L25 19" stroke="#7a6ad8"/></g></svg>
<div class="a" style="left:0px;top:90px;width:1920px;height:4px;background:linear-gradient(#9aa0aa,#6c6c6c 30%,#8c8c8c 70%,#b0b0b0)"></div>
<div class="hl" style="left:0px;top:155px;width:1901px;height:4px;"></div>
<div class="hl" style="left:0px;top:380px;width:1901px;height:4px;"></div>
<div class="a" style="left:0px;top:94px;width:2px;height:928px;background:linear-gradient(90deg,#848484,#a4a4a4)"></div>
<div class="a" style="left:1897px;top:92px;width:4px;height:930px;background:linear-gradient(90deg,#8a8a8a,#747474 50%,#999)"></div>
<div class="a" style="left:384px;top:384px;width:2px;height:632px;background:#787878"></div>
<div class="a" style="left:388px;top:386px;width:1px;height:630px;background:#c8c8c8"></div>
<div class="a" style="left:2px;top:1016px;width:1896px;height:1px;background:#a0a0a0"></div>
<div class="a" style="left:2px;top:1017px;width:1896px;height:1px;background:#fdfdfd"></div>
<div class="a" style="left:2px;top:1018px;width:1897px;height:1px;background:#787878"></div>
<div class="a" style="left:2px;top:1019px;width:1899px;height:3px;background:#b6b6b6"></div>
<div class="a" style="left:0px;top:1022px;width:1920px;height:20px;background:#f0f0f0"></div>
<div class="a" style="left:1901px;top:92px;width:19px;height:950px;background:#f0f0f0"></div>
<div class="a" style="left:1909px;top:109px;width:2px;height:869px;background:#8a8a8a"></div>
<div class="a" style="left:19px;top:1030px;width:1825px;height:2px;background:#8a8a8a"></div>
<div class="a" style="left:1812px;top:262px;width:86px;height:118px;background:#8a8a8a"></div>
<div class="pnl" style="left:5px;top:97px;width:1301px;height:57px"><div class="hd" style="height:17px"></div><div class="bd" style="top:18px"></div><div class="br"></div><div class="bb"></div><div class="t pt" style="left:7px;top:5px">View</div></div>
<div class="pnl" style="left:1310px;top:97px;width:307px;height:57px"><div class="hd" style="height:17px"></div><div class="bd" style="top:18px"></div><div class="br"></div><div class="bb"></div><div class="t pt" style="left:8px;top:5px">Sensor</div></div>
<div class="pnl" style="left:1621px;top:97px;width:120px;height:57px"><div class="hd" style="height:17px"></div><div class="bd" style="top:18px"></div><div class="br"></div><div class="bb"></div><div class="t pt" style="left:8px;top:5px">Generator</div></div>
<div class="pnl" style="left:1745px;top:97px;width:150px;height:57px"><div class="hd" style="height:17px"></div><div class="bd" style="top:18px"></div><div class="br"></div><div class="bb"></div><div class="t pt" style="left:8px;top:5px">Parameters</div></div>
<div class="a" style="left:6px;top:121px;width:200px;height:21px;background:#fff;border:1px solid #7a7a7a;border-right-color:#ddd;border-bottom-color:#ddd;box-shadow:inset 1px 1px 0 #9a9a9a"></div>
<div class="t th" style="left:11px;top:126px;">Blue saturation scale</div>
<div class="a" style="left:188px;top:124px;width:16px;height:17px;background:#f0f0f0;border:1px solid #fff;border-right-color:#6d6d6d;border-bottom-color:#6d6d6d;box-shadow:inset -1px -1px 0 #a0a0a0"></div>
<svg class="a" style="left:192px;top:130px" width="8" height="5"><path d="M0 0h7l-3.500 4z" fill="#000"/></svg>
<div class="a" style="left:216px;top:118px;width:1056px;height:28px;background:#f0f0f0;border-left:1px solid #c8c8c8;border-top:1px solid #d8d8d8;border-bottom:1px solid #fff;border-right:1px solid #fff"></div>
<div class="t" style="left:217px;top:120px;font-weight:bold;font-size:16px;letter-spacing:0.03px">Color Space: HDTV Rec709 , White Point: D65, EOTF: &nbsp;SDR, Power law (black compensation) w/gamma = 2.20, # of measures: 0 [20:23:49]</div>
<div class="a" style="left:1278px;top:121px;width:17px;height:11px;background:#f0f0f0;border:1px solid #fff;border-right-color:#6d6d6d;border-bottom-color:#6d6d6d;box-shadow:inset -1px -1px 0 #a0a0a0"></div>
<svg class="a" style="left:1283px;top:124px" width="8" height="5"><path d="M0 4h7l-3.500-4z" fill="#000"/></svg>
<div class="a" style="left:1278px;top:133px;width:17px;height:11px;background:#f0f0f0;border:1px solid #fff;border-right-color:#6d6d6d;border-bottom-color:#6d6d6d;box-shadow:inset -1px -1px 0 #a0a0a0"></div>
<svg class="a" style="left:1283px;top:136px" width="8" height="5"><path d="M0 0h7l-3.500 4z" fill="#000"/></svg>
<div class="a" style="left:1314px;top:117px;width:296px;height:17px;background:#f0f0f0"></div>
<div class="t th" style="left:1316px;top:119px;">Simulated sensor</div>
<div class="a" style="left:1316px;top:135px;width:68px;height:15px;background:#f0f0f0"></div>
<div class="t th" style="left:1318px;top:136px;">Adaptive</div>
<svg class="a" style="left:1423px;top:135px" width="14" height="13"><path d="M1 0.500L13 6.500L1 12.500z" fill="#7fd34c" stroke="#63b535" stroke-width="0.8"/></svg>
<svg class="a" style="left:1588px;top:132px" width="18" height="18" viewBox="0 0 18 18"><path d="M1 3l9-2 1 13-9 3z" fill="#2f6fd6" stroke="#1c4fa8" stroke-width="1"/><path d="M3 5l6-1.300 .7 8.500-6 1.700z" fill="#e8f0ff"/><path d="M4 9l2 2 3-4" stroke="#e0b030" stroke-width="1.500" fill="none"/><path d="M9 10l7-3" stroke="#4a7fd8" stroke-width="2"/><circle cx="16" cy="7" r="1.300" fill="#e04030"/></svg>
<div class="a" style="left:1624px;top:117px;width:108px;height:17px;background:#f0f0f0"></div>
<div class="t th" style="left:1624px;top:119px;">DVD manual</div>
<svg class="a" style="left:1718px;top:134px" width="18" height="18" viewBox="0 0 18 18"><path d="M1 3l9-2 1 13-9 3z" fill="#2f6fd6" stroke="#1c4fa8" stroke-width="1"/><path d="M3 5l6-1.300 .7 8.500-6 1.700z" fill="#e8f0ff"/><path d="M4 9l2 2 3-4" stroke="#e0b030" stroke-width="1.500" fill="none"/><path d="M9 10l7-3" stroke="#4a7fd8" stroke-width="2"/><circle cx="16" cy="7" r="1.300" fill="#e04030"/></svg>
<div class="a" style="left:1752px;top:117px;width:100px;height:17px;background:#f0f0f0"></div>
<div class="a" style="left:1754px;top:119px;width:12px;height:12px;background:#fff;border:1px solid #6a6a6a;border-right-color:#e8e8e8;border-bottom-color:#e8e8e8;box-shadow:inset 1px 1px 0 #a0a0a0"></div>
<div class="t th" style="left:1773px;top:120px;">Reference</div>
<div class="a" style="left:1752px;top:134px;width:135px;height:17px;background:#f0f0f0"></div>
<div class="a" style="left:1754px;top:136px;width:12px;height:12px;background:#f0f0f0;border:1px solid #8a8a8a;border-right-color:#fff;border-bottom-color:#fff;box-shadow:inset 1px 1px 0 #b0b0b0"></div>
<div class="t th" style="left:1773px;top:137px;color:#a6a6a6;text-shadow:1px 1px 0 #fff">XYZ Adjustment</div>
<div class="pnl" style="left:5px;top:162px;width:1806px;height:217px"><div class="hd" style="height:14px"></div><div class="bd" style="top:15px"></div><div class="br"></div><div class="bb"></div><div class="t pt" style="left:8px;top:5px"></div></div>
<div class="t" style="left:14px;top:166px;font-weight:bold;font-size:11px;color:#4a4446;height:10px;overflow:hidden">( Average dE: 2.07 [0.68,1.21,1.10] max: 2.75 [CIE2000] )</div>
<div class="a" style="left:6px;top:176px;width:1px;height:201px;background:#e8e000"></div>
<div class="a" style="left:7px;top:176px;width:1px;height:200px;background:#fff"></div>
<div class="a" style="left:6px;top:376px;width:1802px;height:1px;background:#e8e000"></div>
<div class="a" style="left:8px;top:375px;width:1799px;height:1px;background:#fff"></div>
<div class="a" style="left:1807px;top:166px;width:1px;height:211px;background:#f0e800"></div>
<div class="a" style="left:1789px;top:179px;width:19px;height:1px;background:#f0e800"></div>
<div class="a" style="left:8px;top:177px;width:1782px;height:198px;background:#f0f0f0;border-top:1px solid #808080;border-left:1px solid #808080"></div>
<div class="a" style="left:9px;top:178px;width:1780px;height:1px;background:#5a5a5a"></div>
<div class="a" style="left:1790px;top:180px;width:17px;height:195px;background:#ebebeb"></div>
<div class="cell" style="left:10px;top:179px;width:54px;height:22px;background:#f0f0f0;border-right:1px solid #555;border-bottom:1px solid #555;font-weight:bold;letter-spacing:-0.2px;text-align:center;line-height:22px">% Sat</div>
<div class="cell" style="left:64px;top:179px;width:342px;height:22px;background:#f0f0f0;border-right:1px solid #808080;border-bottom:1px solid #808080;font-weight:bold;letter-spacing:-0.2px;text-align:center;line-height:22px">0</div>
<div class="cell" style="left:406px;top:179px;width:342px;height:22px;background:#bfbfef;border-right:1px solid #808080;border-bottom:1px solid #808080;font-weight:bold;letter-spacing:-0.2px;text-align:center;line-height:22px">25</div>
<div class="cell" style="left:748px;top:179px;width:341px;height:22px;background:#8f8fef;border-right:1px solid #808080;border-bottom:1px solid #808080;font-weight:bold;letter-spacing:-0.2px;text-align:center;line-height:22px">50</div>
<div class="cell" style="left:1089px;top:179px;width:342px;height:22px;background:#5f5fef;border-right:1px solid #808080;border-bottom:1px solid #808080;font-weight:bold;letter-spacing:-0.2px;text-align:center;line-height:22px">75</div>
<div class="cell" style="left:1431px;top:179px;width:340px;height:22px;background:#2f2fef;border-right:1px solid #808080;border-bottom:1px solid #808080;font-weight:bold;letter-spacing:-0.2px;text-align:center;line-height:22px">100</div>
<div class="cell" style="left:10px;top:201px;width:54px;height:25px;background:#f0f0f0;border-right:1px solid #555;border-bottom:1px solid #555;font-weight:bold;letter-spacing:-0.2px;text-align:center;line-height:24px">x</div>
<div class="cell" style="left:64px;top:201px;width:342px;height:25px;background:#fff;border-right:1px solid #c0c0c0;border-bottom:1px solid #c0c0c0;text-align:right;padding-right:1px;line-height:26px;letter-spacing:-0.6px;">0.3095</div>
<div class="cell" style="left:406px;top:201px;width:342px;height:25px;background:#fff;border-right:1px solid #c0c0c0;border-bottom:1px solid #c0c0c0;text-align:right;padding-right:1px;line-height:26px;letter-spacing:-0.6px;">0.2562</div>
<div class="cell" style="left:748px;top:201px;width:341px;height:25px;background:#fff;border-right:1px solid #c0c0c0;border-bottom:1px solid #c0c0c0;text-align:right;padding-right:1px;line-height:26px;letter-spacing:-0.6px;">0.2188</div>
<div class="cell" style="left:1089px;top:201px;width:342px;height:25px;background:#fff;border-right:1px solid #c0c0c0;border-bottom:1px solid #c0c0c0;text-align:right;padding-right:1px;line-height:26px;letter-spacing:-0.6px;">0.1853</div>
<div class="cell" style="left:1431px;top:201px;width:340px;height:25px;background:#fff;border-right:1px solid #c0c0c0;border-bottom:1px solid #c0c0c0;text-align:right;padding-right:1px;line-height:26px;letter-spacing:-0.6px;">0.1575</div>
<div class="cell" style="left:10px;top:226px;width:54px;height:25px;background:#f0f0f0;border-right:1px solid #555;border-bottom:1px solid #555;font-weight:bold;letter-spacing:-0.2px;text-align:center;line-height:24px">y</div>
<div class="cell" style="left:64px;top:226px;width:342px;height:25px;background:#fff;border-right:1px solid #c0c0c0;border-bottom:1px solid #c0c0c0;text-align:right;padding-right:1px;line-height:26px;letter-spacing:-0.6px;">0.3322</div>
<div class="cell" style="left:406px;top:226px;width:342px;height:25px;background:#fff;border-right:1px solid #c0c0c0;border-bottom:1px solid #c0c0c0;text-align:right;padding-right:1px;line-height:26px;letter-spacing:-0.6px;">0.2478</div>
<div class="cell" style="left:748px;top:226px;width:341px;height:25px;background:#fff;border-right:1px solid #c0c0c0;border-bottom:1px solid #c0c0c0;text-align:right;padding-right:1px;line-height:26px;letter-spacing:-0.6px;">0.1842</div>
<div class="cell" style="left:1089px;top:226px;width:342px;height:25px;background:#fff;border-right:1px solid #c0c0c0;border-bottom:1px solid #c0c0c0;text-align:right;padding-right:1px;line-height:26px;letter-spacing:-0.6px;">0.1235</div>
<div class="cell" style="left:1431px;top:226px;width:340px;height:25px;background:#fff;border-right:1px solid #c0c0c0;border-bottom:1px solid #c0c0c0;text-align:right;padding-right:1px;line-height:26px;letter-spacing:-0.6px;">0.0611</div>
<div class="cell" style="left:10px;top:251px;width:54px;height:25px;background:#f0f0f0;border-right:1px solid #555;border-bottom:1px solid #555;font-weight:bold;letter-spacing:-0.2px;text-align:center;line-height:24px">Y</div>
<div class="cell" style="left:64px;top:251px;width:342px;height:25px;background:#fff;border-right:1px solid #c0c0c0;border-bottom:1px solid #c0c0c0;text-align:right;padding-right:1px;line-height:26px;letter-spacing:-0.6px;">26.010</div>
<div class="cell" style="left:406px;top:251px;width:342px;height:25px;background:#fff;border-right:1px solid #c0c0c0;border-bottom:1px solid #c0c0c0;text-align:right;padding-right:1px;line-height:26px;letter-spacing:-0.6px;">27.131</div>
<div class="cell" style="left:748px;top:251px;width:341px;height:25px;background:#fff;border-right:1px solid #c0c0c0;border-bottom:1px solid #c0c0c0;text-align:right;padding-right:1px;line-height:26px;letter-spacing:-0.6px;">26.878</div>
<div class="cell" style="left:1089px;top:251px;width:342px;height:25px;background:#fff;border-right:1px solid #c0c0c0;border-bottom:1px solid #c0c0c0;text-align:right;padding-right:1px;line-height:26px;letter-spacing:-0.6px;">28.578</div>
<div class="cell" style="left:1431px;top:251px;width:340px;height:25px;background:#fff;border-right:1px solid #c0c0c0;border-bottom:1px solid #c0c0c0;text-align:right;padding-right:1px;line-height:26px;letter-spacing:-0.6px;">30.360</div>
<div class="cell" style="left:10px;top:276px;width:54px;height:25px;background:#f0f0f0;border-right:1px solid #555;border-bottom:1px solid #555;font-weight:bold;letter-spacing:-0.2px;text-align:center;line-height:24px">Delta E</div>
<div class="cell" style="left:64px;top:276px;width:342px;height:25px;background:#fefeaa;border-right:1px solid #c0c0c0;border-bottom:1px solid #c0c0c0;text-align:right;padding-right:1px;line-height:26px;font-weight:bold;letter-spacing:-0.3px;font-size:12.5px;">2.2</div>
<div class="cell" style="left:406px;top:276px;width:342px;height:25px;background:#fefeaa;border-right:1px solid #c0c0c0;border-bottom:1px solid #c0c0c0;text-align:right;padding-right:1px;line-height:26px;font-weight:bold;letter-spacing:-0.3px;font-size:12.5px;">2.8</div>
<div class="cell" style="left:748px;top:276px;width:341px;height:25px;background:#fefeaa;border-right:1px solid #c0c0c0;border-bottom:1px solid #c0c0c0;text-align:right;padding-right:1px;line-height:26px;font-weight:bold;letter-spacing:-0.3px;font-size:12.5px;">2.1</div>
<div class="cell" style="left:1089px;top:276px;width:342px;height:25px;background:#adfaad;border-right:1px solid #c0c0c0;border-bottom:1px solid #c0c0c0;text-align:right;padding-right:1px;line-height:26px;font-weight:bold;letter-spacing:-0.3px;font-size:12.5px;">1.2</div>
<div class="cell" style="left:1431px;top:276px;width:340px;height:25px;background:#fefeaa;border-right:1px solid #c0c0c0;border-bottom:1px solid #c0c0c0;text-align:right;padding-right:1px;line-height:26px;font-weight:bold;letter-spacing:-0.3px;font-size:12.5px;">2.1</div>
<div class="cell" style="left:10px;top:301px;width:54px;height:25px;background:#f0f0f0;border-right:1px solid #555;border-bottom:1px solid #555;font-weight:bold;letter-spacing:-0.2px;text-align:center;line-height:24px">delta xy</div>
<div class="cell" style="left:64px;top:301px;width:342px;height:25px;background:#f0f0f0;border-right:1px solid #c0c0c0;border-bottom:1px solid #c0c0c0;text-align:right;padding-right:1px;line-height:26px;letter-spacing:-0.6px;">0.0045</div>
<div class="cell" style="left:406px;top:301px;width:342px;height:25px;background:#f0f0f0;border-right:1px solid #c0c0c0;border-bottom:1px solid #c0c0c0;text-align:right;padding-right:1px;line-height:26px;letter-spacing:-0.6px;">0.0205</div>
<div class="cell" style="left:748px;top:301px;width:341px;height:25px;background:#f0f0f0;border-right:1px solid #c0c0c0;border-bottom:1px solid #c0c0c0;text-align:right;padding-right:1px;line-height:26px;letter-spacing:-0.6px;">0.0162</div>
<div class="cell" style="left:1089px;top:301px;width:342px;height:25px;background:#f0f0f0;border-right:1px solid #c0c0c0;border-bottom:1px solid #c0c0c0;text-align:right;padding-right:1px;line-height:26px;letter-spacing:-0.6px;">0.0076</div>
<div class="cell" style="left:1431px;top:301px;width:340px;height:25px;background:#f0f0f0;border-right:1px solid #c0c0c0;border-bottom:1px solid #c0c0c0;text-align:right;padding-right:1px;line-height:26px;letter-spacing:-0.6px;">0.0076</div>
<div class="cell" style="left:10px;top:326px;width:54px;height:25px;background:#f0f0f0;border-right:1px solid #555;border-bottom:1px solid #555;font-weight:bold;letter-spacing:-0.2px;text-align:center;line-height:24px">delta L</div>
<div class="cell" style="left:64px;top:326px;width:342px;height:25px;background:#e0e0e0;border-right:1px solid #c0c0c0;border-bottom:1px solid #c0c0c0;text-align:right;padding-right:1px;line-height:26px;letter-spacing:-0.6px;">-6.8 %</div>
<div class="cell" style="left:406px;top:326px;width:342px;height:25px;background:#e0e0e0;border-right:1px solid #c0c0c0;border-bottom:1px solid #c0c0c0;text-align:right;padding-right:1px;line-height:26px;letter-spacing:-0.6px;">-2.1 %</div>
<div class="cell" style="left:748px;top:326px;width:341px;height:25px;background:#e0e0e0;border-right:1px solid #c0c0c0;border-bottom:1px solid #c0c0c0;text-align:right;padding-right:1px;line-height:26px;letter-spacing:-0.6px;">-3.5 %</div>
<div class="cell" style="left:1089px;top:326px;width:342px;height:25px;background:#e0e0e0;border-right:1px solid #c0c0c0;border-bottom:1px solid #c0c0c0;text-align:right;padding-right:1px;line-height:26px;letter-spacing:-0.6px;">+2.8 %</div>
<div class="cell" style="left:1431px;top:326px;width:340px;height:25px;background:#e0e0e0;border-right:1px solid #c0c0c0;border-bottom:1px solid #c0c0c0;text-align:right;padding-right:1px;line-height:26px;letter-spacing:-0.6px;">+11.2 %</div>
<div class="a" style="left:10px;top:351px;width:54px;height:3px;background:#f0f0f0;border-right:1px solid #555"></div>
<div class="a" style="left:64px;top:351px;width:342px;height:3px;background:#f0f0f0;border-right:1px solid #c0c0c0"></div>
<div class="a" style="left:406px;top:351px;width:342px;height:3px;background:#f0f0f0;border-right:1px solid #c0c0c0"></div>
<div class="a" style="left:748px;top:351px;width:341px;height:3px;background:#f0f0f0;border-right:1px solid #c0c0c0"></div>
<div class="a" style="left:1089px;top:351px;width:342px;height:3px;background:#f0f0f0;border-right:1px solid #c0c0c0"></div>
<div class="a" style="left:1431px;top:351px;width:340px;height:3px;background:#f0f0f0;border-right:1px solid #c0c0c0"></div>
<div class="a" style="left:1771px;top:179px;width:18px;height:174px;background:#f0f0f0"></div>
<div class="a" style="left:1779px;top:195px;width:2px;height:141px;background:#8a8a8a"></div>
<div class="a" style="left:9px;top:354px;width:1780px;height:21px;background:#f0f0f0"></div>
<svg class="a" style="left:14px;top:359px" width="8" height="10"><path d="M7 0.500v8l-6.500-4z" fill="#a0a0a0"/></svg>
<svg class="a" style="left:1758px;top:359px" width="8" height="10"><path d="M1 0.500v8l6.500-4z" fill="#a0a0a0"/></svg>
<div class="pnl" style="left:1815px;top:162px;width:80px;height:100px"><div class="hd" style="height:18px"></div><div class="bd" style="top:19px"></div><div class="br"></div><div class="bb"></div><div class="t pt" style="left:8px;top:5px">Display</div></div>
<div class="a" style="left:1822px;top:181px;width:66px;height:15px;background:#f0f0f0"></div>
<svg class="a" style="left:1822px;top:181px" width="13" height="13" viewBox="0 0 13 13"><circle cx="6.500" cy="6.500" r="5.500" fill="#f0f0f0"/><path d="M2.600 10.400A5.500 5.500 0 0 1 10.400 2.600" fill="none" stroke="#6a6a6a" stroke-width="1.300"/><path d="M10.400 2.600A5.500 5.500 0 0 1 2.600 10.400" fill="none" stroke="#e6e6e6" stroke-width="1.300"/></svg>
<div class="t th" style="left:1841px;top:183px;color:#a6a6a6;text-shadow:1px 1px 0 #fff">Sensor</div>
<div class="a" style="left:1822px;top:197px;width:66px;height:15px;background:#f0f0f0"></div>
<svg class="a" style="left:1822px;top:197px" width="13" height="13" viewBox="0 0 13 13"><circle cx="6.500" cy="6.500" r="5.500" fill="#fff"/><path d="M2.600 10.400A5.500 5.500 0 0 1 10.400 2.600" fill="none" stroke="#6a6a6a" stroke-width="1.300"/><path d="M10.400 2.600A5.500 5.500 0 0 1 2.600 10.400" fill="none" stroke="#e6e6e6" stroke-width="1.300"/></svg>
<div class="t th" style="left:1841px;top:199px;">RGB</div>
<div class="a" style="left:1822px;top:213px;width:66px;height:15px;background:#f0f0f0"></div>
<svg class="a" style="left:1822px;top:213px" width="13" height="13" viewBox="0 0 13 13"><circle cx="6.500" cy="6.500" r="5.500" fill="#fff"/><path d="M2.600 10.400A5.500 5.500 0 0 1 10.400 2.600" fill="none" stroke="#6a6a6a" stroke-width="1.300"/><path d="M10.400 2.600A5.500 5.500 0 0 1 2.600 10.400" fill="none" stroke="#e6e6e6" stroke-width="1.300"/></svg>
<div class="t th" style="left:1841px;top:215px;">XYZ</div>
<div class="a" style="left:1822px;top:229px;width:66px;height:15px;background:#f0f0f0"></div>
<svg class="a" style="left:1822px;top:229px" width="13" height="13" viewBox="0 0 13 13"><circle cx="6.500" cy="6.500" r="5.500" fill="#fff"/><path d="M2.600 10.400A5.500 5.500 0 0 1 10.400 2.600" fill="none" stroke="#6a6a6a" stroke-width="1.300"/><path d="M10.400 2.600A5.500 5.500 0 0 1 2.600 10.400" fill="none" stroke="#e6e6e6" stroke-width="1.300"/></svg>
<div class="t th" style="left:1841px;top:231px;">xyz</div>
<div class="a" style="left:1822px;top:244px;width:66px;height:15px;background:#f0f0f0"></div>
<svg class="a" style="left:1822px;top:244px" width="13" height="13" viewBox="0 0 13 13"><circle cx="6.500" cy="6.500" r="5.500" fill="#fff"/><path d="M2.600 10.400A5.500 5.500 0 0 1 10.400 2.600" fill="none" stroke="#6a6a6a" stroke-width="1.300"/><path d="M10.400 2.600A5.500 5.500 0 0 1 2.600 10.400" fill="none" stroke="#e6e6e6" stroke-width="1.300"/><circle cx="6.500" cy="6.500" r="2" fill="#000"/></svg>
<div class="t th" style="left:1841px;top:246px;">xyY</div>
<div class="a" style="left:1813px;top:264px;width:82px;height:29px;background:#ebebeb;border:1px solid #f8f8f8;border-right-color:#b4b4b4;border-bottom-color:#b4b4b4"></div>
<div class="t th" style="left:1863px;top:275px;">Go</div>
<div class="a" style="left:1813px;top:294px;width:82px;height:29px;background:#ebebeb;border:1px solid #f8f8f8;border-right-color:#b4b4b4;border-bottom-color:#b4b4b4"></div>
<div class="t th" style="left:1851px;top:304px;">Delete</div>
<div class="a" style="left:1813px;top:324px;width:82px;height:29px;background:#ebebeb;border:1px solid #f8f8f8;border-right-color:#b4b4b4;border-bottom-color:#b4b4b4"></div>
<div class="t th" style="left:1858px;top:334px;">Refs</div>
<svg class="a" style="left:1817px;top:266px" width="34" height="28" viewBox="0 0 34 28"><rect x="1" y="2" width="31" height="22" fill="#b0b0b0"/><path d="M1 2v22M32 5v22" stroke="#222" stroke-width="1.500" stroke-dasharray="2 1.500"/><path d="M3 6h6v4h-4v3h4v4h-4v3h6M31 6h-6v4h4v3h-4v4h4v3h-6" fill="none" stroke="#555" stroke-width="1.200"/><path d="M5 0 L18 0 Q22 10 26 18 Q29 22 32 22 L29 28 L16 28 Q12 18 9 8 Q8 3 5 0z" fill="#0a1a8a"/><path d="M9 1.500L17 1.500Q18.500 6 20 9.500L12.500 11Q10.500 6 9 1.500z" fill="#1a6af0"/><path d="M13.200 12.500L20.700 11Q22.500 15 24.500 18.500L17.500 20.500Q15 16.500 13.200 12.500z" fill="#3a8cff"/><path d="M18.300 22L25.300 20Q27.500 22.500 30 23L28 26.500L20 26.500z" fill="#58a8ff"/></svg>
<svg class="a" style="left:1819px;top:296px" width="30" height="27" viewBox="0 0 30 27"><defs><linearGradient id="bing" x1="0" y1="0" x2="1" y2="1"><stop offset="0" stop-color="#d8efff"/><stop offset=".5" stop-color="#7fbdf0"/><stop offset="1" stop-color="#c8e6fb"/></linearGradient></defs><path d="M0.500 5L28 0.500L25.500 23Q15 28 5 24.500z" fill="url(#bing)" stroke="#9cc8ea" stroke-width=".6"/><path d="M13 12a5 5 0 0 1 9-2l1.500-1.500v5h-5l1.700-1.700a3 3 0 0 0-5.200 .7zM23 15a5 5 0 0 1-9 2l-1.500 1.500v-5h5l-1.700 1.700a3 3 0 0 0 5.200-.7z" fill="#18a018"/></svg>
<svg class="a" style="left:1818px;top:328px" width="33" height="24" viewBox="0 0 33 24" shape-rendering="crispEdges"><path d="M0 24V12l2-2 2-4 2-3 1 3 2 2 2 3 3 1 2-6 2-5 2 1 2 3 2 5 2 2 2-1 2 2v12z" fill="#ffff00"/><rect x="0" y="13" width="2" height="11" fill="#800080"/><rect x="2" y="10" width="2" height="14" fill="#ff00ff"/><rect x="4" y="5" width="4" height="19" fill="#0000ff"/><rect x="8" y="9" width="3" height="15" fill="#00ffff"/><rect x="11" y="13" width="4" height="11" fill="#00ff00"/><rect x="15" y="3" width="6" height="21" fill="#ffff00"/><rect x="21" y="4" width="4" height="20" fill="#800000"/><rect x="25" y="11" width="7" height="13" fill="#ff0000"/></svg>
<div class="a" style="left:1818px;top:358px;width:56px;height:18px;background:#f0f0f0"></div>
<div class="a" style="left:1819px;top:361px;width:12px;height:12px;background:#fff;border:1px solid #6a6a6a;border-right-color:#e8e8e8;border-bottom-color:#e8e8e8;box-shadow:inset 1px 1px 0 #a0a0a0"></div>
<div class="t th" style="left:1837px;top:361px;">Edit</div>
<div class="pnl" style="left:5px;top:387px;width:378px;height:629px"><div class="hd" style="height:17px"></div><div class="bd" style="top:18px"></div><div class="br"></div><div class="bb"></div><div class="t pt" style="left:7px;top:5px">Selected color</div></div>
<div class="a" style="left:18px;top:409px;width:110px;height:15px;background:#f0f0f0"></div>
<div class="t th" style="left:18px;top:411px;">RGB Levels</div>
<div class="a" style="left:230px;top:407px;width:128px;height:14px;background:#f0f0f0"></div>
<div class="t th" style="left:241px;top:409px;">Current Measure</div>
<div class="a" style="left:14px;top:433px;width:200px;height:86px;background:#f0f0f0"></div>
<div class="a" style="left:14px;top:477px;width:200px;height:1px;background:repeating-linear-gradient(90deg,#8a8a8a 0 3px,transparent 3px 6px)"></div>
<div class="t" style="left:8.5px;top:497px;font-family:'Liberation Serif',serif;font-weight:bold;font-size:11.5px;width:60px;text-align:center">0.0%</div>
<div class="t" style="left:59.5px;top:497px;font-family:'Liberation Serif',serif;font-weight:bold;font-size:11.5px;width:60px;text-align:center">0.0%</div>
<div class="t" style="left:110.5px;top:497px;font-family:'Liberation Serif',serif;font-weight:bold;font-size:11.5px;width:60px;text-align:center">0.0%</div>
<div class="t" style="left:162px;top:497px;font-family:'Liberation Serif',serif;font-weight:bold;font-size:11.5px;width:60px;text-align:center">dE 0.0</div>
<svg class="a" style="left:14px;top:506px" width="200" height="13" viewBox="0 0 200 13"><rect x="0" y="8" width="200" height="5" fill="#000"/><path d="M0.5 8.500 Q6.5 4 18.5 3.200 L30.5 3.200 Q42.5 4 48.5 8.500z" fill="#a00000" stroke="#000" stroke-width="1"/><path d="M52 8.500 Q58 4 70 3.200 L82 3.200 Q94 4 100 8.500z" fill="#00a000" stroke="#000" stroke-width="1"/><path d="M103 8.500 Q109 4 121 3.200 L133 3.200 Q145 4 151 8.500z" fill="#0000a0" stroke="#000" stroke-width="1"/><path d="M154 8.500 Q160 4 172 3.200 L184 3.200 Q196 4 202 8.500z" fill="#c08800" stroke="#000" stroke-width="1"/></svg>
<div class="a" style="left:16px;top:533px;width:192px;height:74px;background:#f0f0f0"></div>
<div class="t" style="left:35px;top:535px;font-weight:bold;font-size:13px;letter-spacing:0.4px">Measure</div>
<div class="t" style="left:127px;top:535px;font-weight:bold;font-size:13px;letter-spacing:0.25px">Reference</div>
<div class="a" style="left:18px;top:622px;width:41px;height:15px;background:#f0f0f0"></div>
<div class="t th" style="left:18px;top:624px;">Target</div>
<div class="a" style="left:50px;top:638px;width:116px;height:89px;border:1px solid #000;background:conic-gradient(from 0deg at 50% 50%,#40ff00 0deg,#b0e000 30deg,#ffc000 52deg,#ff4000 75deg,#ff0000 95deg,#ff0060 120deg,#ff0090 135deg,#c000b0 160deg,#8000c8 185deg,#3000f0 215deg,#0000ff 232deg,#0040e0 250deg,#0080b0 275deg,#00c090 295deg,#00ff80 315deg,#10ff30 340deg,#40ff00 360deg)"></div>
<svg class="a" style="left:50px;top:638px" width="116" height="89" viewBox="0 0 116 89"><rect x="17.500" y="13.500" width="81" height="62" rx="8" ry="8" fill="#000" stroke="#fff" stroke-width="1"/><path d="M58.500 13v63" stroke="#fff" stroke-width="1" stroke-dasharray="3 2"/><path d="M17 44.500h83" stroke="#fff" stroke-width="1" stroke-dasharray="3 2"/><path d="M15 44.500h2M100 44.500h2" stroke="#000" stroke-width="1"/><ellipse cx="58.500" cy="44.500" rx="21" ry="15.500" fill="none" stroke="#fff" stroke-width="1" stroke-dasharray="3 3"/></svg>
<div class="a" style="left:220px;top:431px;width:153px;height:577px;background:#f0f0f0;border-left:2px solid #808080;border-top:2px solid #808080;border-right:1px solid #fff;border-bottom:1px solid #fff"></div>
<div class="cell" style="left:222px;top:432px;width:53px;height:23px;background:#f0f0f0;border-right:1px solid #555;border-bottom:1px solid #555;font-weight:bold;letter-spacing:-0.2px;text-align:center;line-height:24px">Y cd/m<sup style="font-size:8px;line-height:0;vertical-align:4px">2</sup></div>
<div class="cell" style="left:275px;top:432px;width:80px;height:23px;background:#fff;border-right:1px solid #c0c0c0;border-bottom:1px solid #c0c0c0"></div>
<div class="cell" style="left:222px;top:455px;width:53px;height:23px;background:#f0f0f0;border-right:1px solid #555;border-bottom:1px solid #555;font-weight:bold;letter-spacing:-0.2px;text-align:center;line-height:24px">Y ftL</div>
<div class="cell" style="left:275px;top:455px;width:80px;height:23px;background:#fff;border-right:1px solid #c0c0c0;border-bottom:1px solid #c0c0c0"></div>
<div class="cell" style="left:222px;top:478px;width:53px;height:23px;background:#f0f0f0;border-right:1px solid #555;border-bottom:1px solid #555;font-weight:bold;letter-spacing:-0.2px;text-align:center;line-height:24px">T°</div>
<div class="cell" style="left:275px;top:478px;width:80px;height:23px;background:#fff;border-right:1px solid #c0c0c0;border-bottom:1px solid #c0c0c0"></div>
<div class="cell" style="left:222px;top:501px;width:53px;height:23px;background:#f0f0f0;border-right:1px solid #555;border-bottom:1px solid #555;font-weight:bold;letter-spacing:-0.2px;text-align:center;line-height:24px">X</div>
<div class="cell" style="left:275px;top:501px;width:80px;height:23px;background:#e0e0e0;border-right:1px solid #c0c0c0;border-bottom:1px solid #c0c0c0"></div>
<div class="cell" style="left:222px;top:524px;width:53px;height:23px;background:#f0f0f0;border-right:1px solid #555;border-bottom:1px solid #555;font-weight:bold;letter-spacing:-0.2px;text-align:center;line-height:24px">Y</div>
<div class="cell" style="left:275px;top:524px;width:80px;height:23px;background:#e0e0e0;border-right:1px solid #c0c0c0;border-bottom:1px solid #c0c0c0"></div>
<div class="cell" style="left:222px;top:547px;width:53px;height:23px;background:#f0f0f0;border-right:1px solid #555;border-bottom:1px solid #555;font-weight:bold;letter-spacing:-0.2px;text-align:center;line-height:24px">Z</div>
<div class="cell" style="left:275px;top:547px;width:80px;height:23px;background:#e0e0e0;border-right:1px solid #c0c0c0;border-bottom:1px solid #c0c0c0"></div>
<div class="cell" style="left:222px;top:570px;width:53px;height:23px;background:#f0f0f0;border-right:1px solid #555;border-bottom:1px solid #555;font-weight:bold;letter-spacing:-0.2px;text-align:center;line-height:24px">R</div>
<div class="cell" style="left:275px;top:570px;width:80px;height:23px;background:#fff;border-right:1px solid #c0c0c0;border-bottom:1px solid #c0c0c0"></div>
<div class="cell" style="left:222px;top:593px;width:53px;height:23px;background:#f0f0f0;border-right:1px solid #555;border-bottom:1px solid #555;font-weight:bold;letter-spacing:-0.2px;text-align:center;line-height:24px">G</div>
<div class="cell" style="left:275px;top:593px;width:80px;height:23px;background:#fff;border-right:1px solid #c0c0c0;border-bottom:1px solid #c0c0c0"></div>
<div class="cell" style="left:222px;top:616px;width:53px;height:23px;background:#f0f0f0;border-right:1px solid #555;border-bottom:1px solid #555;font-weight:bold;letter-spacing:-0.2px;text-align:center;line-height:24px">B</div>
<div class="cell" style="left:275px;top:616px;width:80px;height:23px;background:#fff;border-right:1px solid #c0c0c0;border-bottom:1px solid #c0c0c0"></div>
<div class="cell" style="left:222px;top:639px;width:53px;height:23px;background:#f0f0f0;border-right:1px solid #555;border-bottom:1px solid #555;font-weight:bold;letter-spacing:-0.2px;text-align:center;line-height:24px">x</div>
<div class="cell" style="left:275px;top:639px;width:80px;height:23px;background:#e0e0e0;border-right:1px solid #c0c0c0;border-bottom:1px solid #c0c0c0"></div>
<div class="cell" style="left:222px;top:662px;width:53px;height:23px;background:#f0f0f0;border-right:1px solid #555;border-bottom:1px solid #555;font-weight:bold;letter-spacing:-0.2px;text-align:center;line-height:24px">y</div>
<div class="cell" style="left:275px;top:662px;width:80px;height:23px;background:#e0e0e0;border-right:1px solid #c0c0c0;border-bottom:1px solid #c0c0c0"></div>
<div class="cell" style="left:222px;top:685px;width:53px;height:23px;background:#f0f0f0;border-right:1px solid #555;border-bottom:1px solid #555;font-weight:bold;letter-spacing:-0.2px;text-align:center;line-height:24px">Y</div>
<div class="cell" style="left:275px;top:685px;width:80px;height:23px;background:#e0e0e0;border-right:1px solid #c0c0c0;border-bottom:1px solid #c0c0c0"></div>
<div class="cell" style="left:222px;top:708px;width:53px;height:23px;background:#f0f0f0;border-right:1px solid #555;border-bottom:1px solid #555;font-weight:bold;letter-spacing:-0.2px;text-align:center;line-height:24px">x</div>
<div class="cell" style="left:275px;top:708px;width:80px;height:23px;background:#fff;border-right:1px solid #c0c0c0;border-bottom:1px solid #c0c0c0"></div>
<div class="cell" style="left:222px;top:731px;width:53px;height:23px;background:#f0f0f0;border-right:1px solid #555;border-bottom:1px solid #555;font-weight:bold;letter-spacing:-0.2px;text-align:center;line-height:24px">y</div>
<div class="cell" style="left:275px;top:731px;width:80px;height:23px;background:#fff;border-right:1px solid #c0c0c0;border-bottom:1px solid #c0c0c0"></div>
<div class="cell" style="left:222px;top:754px;width:53px;height:23px;background:#f0f0f0;border-right:1px solid #555;border-bottom:1px solid #555;font-weight:bold;letter-spacing:-0.2px;text-align:center;line-height:24px">z</div>
<div class="cell" style="left:275px;top:754px;width:80px;height:23px;background:#fff;border-right:1px solid #c0c0c0;border-bottom:1px solid #c0c0c0"></div>
<div class="cell" style="left:222px;top:777px;width:53px;height:23px;background:#f0f0f0;border-right:1px solid #555;border-bottom:1px solid #555;font-weight:bold;letter-spacing:-0.2px;text-align:center;line-height:24px">L</div>
<div class="cell" style="left:275px;top:777px;width:80px;height:23px;background:#e0e0e0;border-right:1px solid #c0c0c0;border-bottom:1px solid #c0c0c0"></div>
<div class="cell" style="left:222px;top:800px;width:53px;height:23px;background:#f0f0f0;border-right:1px solid #555;border-bottom:1px solid #555;font-weight:bold;letter-spacing:-0.2px;text-align:center;line-height:24px">a</div>
<div class="cell" style="left:275px;top:800px;width:80px;height:23px;background:#e0e0e0;border-right:1px solid #c0c0c0;border-bottom:1px solid #c0c0c0"></div>
<div class="cell" style="left:222px;top:823px;width:53px;height:23px;background:#f0f0f0;border-right:1px solid #555;border-bottom:1px solid #555;font-weight:bold;letter-spacing:-0.2px;text-align:center;line-height:24px">b</div>
<div class="cell" style="left:275px;top:823px;width:80px;height:23px;background:#e0e0e0;border-right:1px solid #c0c0c0;border-bottom:1px solid #c0c0c0"></div>
<div class="cell" style="left:222px;top:846px;width:53px;height:23px;background:#f0f0f0;border-right:1px solid #555;border-bottom:1px solid #555;font-weight:bold;letter-spacing:-0.2px;text-align:center;line-height:24px">L</div>
<div class="cell" style="left:275px;top:846px;width:80px;height:23px;background:#fff;border-right:1px solid #c0c0c0;border-bottom:1px solid #c0c0c0"></div>
<div class="cell" style="left:222px;top:869px;width:53px;height:23px;background:#f0f0f0;border-right:1px solid #555;border-bottom:1px solid #555;font-weight:bold;letter-spacing:-0.2px;text-align:center;line-height:24px">C</div>
<div class="cell" style="left:275px;top:869px;width:80px;height:23px;background:#fff;border-right:1px solid #c0c0c0;border-bottom:1px solid #c0c0c0"></div>
<div class="cell" style="left:222px;top:892px;width:53px;height:23px;background:#f0f0f0;border-right:1px solid #555;border-bottom:1px solid #555;font-weight:bold;letter-spacing:-0.2px;text-align:center;line-height:24px">H</div>
<div class="cell" style="left:275px;top:892px;width:80px;height:23px;background:#fff;border-right:1px solid #c0c0c0;border-bottom:1px solid #c0c0c0"></div>
<div class="cell" style="left:222px;top:915px;width:53px;height:23px;background:#f0f0f0;border-right:1px solid #555;border-bottom:1px solid #555;font-weight:bold;letter-spacing:-0.2px;text-align:center;line-height:24px">L</div>
<div class="cell" style="left:275px;top:915px;width:80px;height:23px;background:#e0e0e0;border-right:1px solid #c0c0c0;border-bottom:1px solid #c0c0c0"></div>
<div class="cell" style="left:222px;top:938px;width:53px;height:23px;background:#f0f0f0;border-right:1px solid #555;border-bottom:1px solid #555;font-weight:bold;letter-spacing:-0.2px;text-align:center;line-height:24px">M</div>
<div class="cell" style="left:275px;top:938px;width:80px;height:23px;background:#e0e0e0;border-right:1px solid #c0c0c0;border-bottom:1px solid #c0c0c0"></div>
<div class="cell" style="left:222px;top:961px;width:53px;height:23px;background:#f0f0f0;border-right:1px solid #555;border-bottom:1px solid #555;font-weight:bold;letter-spacing:-0.2px;text-align:center;line-height:24px">S</div>
<div class="cell" style="left:275px;top:961px;width:80px;height:23px;background:#e0e0e0;border-right:1px solid #c0c0c0;border-bottom:1px solid #c0c0c0"></div>
<div class="a" style="left:222px;top:984px;width:133px;height:23px;background:#a0a0a0"></div>
<svg class="a" style="left:359px;top:437px" width="10" height="8"><path d="M0.500 7h8l-4-6.500z" fill="#a8a8a8"/></svg>
<svg class="a" style="left:359px;top:995px" width="10" height="8"><path d="M0.500 0.500h8l-4 6.500z" fill="#a8a8a8"/></svg>
<div class="pnl" style="left:391px;top:387px;width:1504px;height:629px"><div class="hd" style="height:17px"></div><div class="bd" style="top:18px"></div><div class="br"></div><div class="bb"></div><div class="t pt" style="left:7px;top:5px">Information</div></div>
<div class="a" style="left:396px;top:409px;width:301px;height:22px;background:#fff;border:1px solid #7a7a7a;border-right-color:#ddd;border-bottom-color:#ddd;box-shadow:inset 1px 1px 0 #9a9a9a"></div>
<div class="a" style="left:400px;top:413px;width:278px;height:16px;background:#0078d7"></div>
<div class="t th" style="left:401px;top:416px;color:#fff">RGB Levels</div>
<div class="a" style="left:679px;top:412px;width:16px;height:17px;background:#f0f0f0;border:1px solid #fff;border-right-color:#6d6d6d;border-bottom-color:#6d6d6d;box-shadow:inset -1px -1px 0 #a0a0a0"></div>
<svg class="a" style="left:683px;top:419px" width="8" height="5"><path d="M0 0h7l-3.500 4z" fill="#000"/></svg>
<div class="a" style="left:399px;top:439px;width:1495px;height:569px;background:#6c6c6c"></div>
<div class="a" style="left:401px;top:441px;width:1493px;height:567px;background:#a4a4a4"></div>
<div class="a" style="left:1890px;top:441px;width:4px;height:567px;background:#fff"></div>
<div class="a" style="left:401px;top:1005px;width:1493px;height:3px;background:#fff"></div>
<div class="a" style="left:1893px;top:439px;width:1px;height:2px;background:#d0d0d0"></div>
<svg class="a" style="left:402px;top:443px" width="1488" height="562" viewBox="0 0 1488 562" shape-rendering="crispEdges"><defs><linearGradient id="cg" x1="0" y1="0" x2="1" y2="0"><stop offset="0" stop-color="#202020"/><stop offset="1" stop-color="#ffffff"/></linearGradient></defs><rect x="0" y="0" width="1488" height="562" fill="url(#cg)"/><rect x="0" y="0" width="1" height="562" fill="#0b4646"/><rect x="148" y="0" width="1" height="562" fill="#0b4646"/><rect x="297" y="0" width="1" height="562" fill="#0b4646"/><rect x="446" y="0" width="1" height="562" fill="#0b4646"/><rect x="595" y="0" width="1" height="562" fill="#0b4646"/><rect x="744" y="0" width="1" height="562" fill="#0b4646"/><rect x="892" y="0" width="1" height="562" fill="#0b4646"/><rect x="1041" y="0" width="1" height="562" fill="#0b4646"/><rect x="1190" y="0" width="1" height="562" fill="#0b4646"/><rect x="1339" y="0" width="1" height="562" fill="#0b4646"/><rect x="0" y="28" width="1488" height="1" fill="#0b4646"/><rect x="0" y="56" width="1488" height="1" fill="#0b4646"/><rect x="0" y="84" width="1488" height="1" fill="#0b4646"/><rect x="0" y="112" width="1488" height="1" fill="#0b4646"/><rect x="0" y="140" width="1488" height="1" fill="#0b4646"/><rect x="0" y="168" width="1488" height="1" fill="#0b4646"/><rect x="0" y="196" width="1488" height="1" fill="#0b4646"/><rect x="0" y="224" width="1488" height="1" fill="#0b4646"/><rect x="0" y="252" width="1488" height="1" fill="#0b4646"/><rect x="0" y="337" width="1488" height="1" fill="#0b4646"/><rect x="0" y="393" width="1488" height="1" fill="#0b4646"/><rect x="0" y="449" width="1488" height="1" fill="#0b4646"/><rect x="0" y="505" width="1488" height="1" fill="#0b4646"/><path d="M0 140.5H1488" stroke="#fff" stroke-width="1" stroke-dasharray="3 3"/><rect x="0" y="137" width="3" height="7" fill="#fff"/></svg>
<svg class="a" style="left:402px;top:443px" width="1488" height="562" viewBox="402 443 1488 562"><polyline points="469.0,647.0 544.0,640.7 619.0,630.0 694.0,608.7 768.0,621.0 843.0,618.0 917.7,610.7 992.7,610.0 1067.0,607.0 1142.0,607.0 1216.7,601.7 1291.7,599.7 1365.7,598.0 1441.0,596.3 1515.7,597.0 1590.7,596.3 1664.7,596.3 1740.0,597.0 1815.0,598.0 1888.3,599.7" fill="none" stroke="#ff0000" stroke-width="2" shape-rendering="crispEdges"/><rect x="465" y="643" width="8" height="8" fill="#ff0000" shape-rendering="crispEdges"/><rect x="540" y="637" width="8" height="8" fill="#ff0000" shape-rendering="crispEdges"/><rect x="615" y="626" width="8" height="8" fill="#ff0000" shape-rendering="crispEdges"/><rect x="690" y="605" width="8" height="8" fill="#ff0000" shape-rendering="crispEdges"/><rect x="764" y="617" width="8" height="8" fill="#ff0000" shape-rendering="crispEdges"/><rect x="839" y="614" width="8" height="8" fill="#ff0000" shape-rendering="crispEdges"/><rect x="914" y="607" width="8" height="8" fill="#ff0000" shape-rendering="crispEdges"/><rect x="989" y="606" width="8" height="8" fill="#ff0000" shape-rendering="crispEdges"/><rect x="1063" y="603" width="8" height="8" fill="#ff0000" shape-rendering="crispEdges"/><rect x="1138" y="603" width="8" height="8" fill="#ff0000" shape-rendering="crispEdges"/><rect x="1213" y="598" width="8" height="8" fill="#ff0000" shape-rendering="crispEdges"/><rect x="1288" y="596" width="8" height="8" fill="#ff0000" shape-rendering="crispEdges"/><rect x="1362" y="594" width="8" height="8" fill="#ff0000" shape-rendering="crispEdges"/><rect x="1437" y="592" width="8" height="8" fill="#ff0000" shape-rendering="crispEdges"/><rect x="1512" y="593" width="8" height="8" fill="#ff0000" shape-rendering="crispEdges"/><rect x="1587" y="592" width="8" height="8" fill="#ff0000" shape-rendering="crispEdges"/><rect x="1661" y="592" width="8" height="8" fill="#ff0000" shape-rendering="crispEdges"/><rect x="1736" y="593" width="8" height="8" fill="#ff0000" shape-rendering="crispEdges"/><rect x="1811" y="594" width="8" height="8" fill="#ff0000" shape-rendering="crispEdges"/><rect x="1884" y="596" width="8" height="8" fill="#ff0000" shape-rendering="crispEdges"/><polyline points="469.0,633.0 544.0,621.7 619.0,612.3 694.0,592.3 768.0,602.7 843.0,599.0 917.7,591.7 992.7,590.7 1067.0,587.0 1142.0,588.0 1216.7,583.7 1291.7,580.7 1365.7,580.0 1441.0,578.3 1515.7,579.0 1590.7,578.0 1664.7,578.0 1740.0,576.7 1815.0,579.0 1888.3,576.7" fill="none" stroke="#00ff00" stroke-width="2" shape-rendering="crispEdges"/><rect x="465" y="629" width="8" height="8" fill="#00ff00" shape-rendering="crispEdges"/><rect x="540" y="618" width="8" height="8" fill="#00ff00" shape-rendering="crispEdges"/><rect x="615" y="608" width="8" height="8" fill="#00ff00" shape-rendering="crispEdges"/><rect x="690" y="588" width="8" height="8" fill="#00ff00" shape-rendering="crispEdges"/><rect x="764" y="599" width="8" height="8" fill="#00ff00" shape-rendering="crispEdges"/><rect x="839" y="595" width="8" height="8" fill="#00ff00" shape-rendering="crispEdges"/><rect x="914" y="588" width="8" height="8" fill="#00ff00" shape-rendering="crispEdges"/><rect x="989" y="587" width="8" height="8" fill="#00ff00" shape-rendering="crispEdges"/><rect x="1063" y="583" width="8" height="8" fill="#00ff00" shape-rendering="crispEdges"/><rect x="1138" y="584" width="8" height="8" fill="#00ff00" shape-rendering="crispEdges"/><rect x="1213" y="580" width="8" height="8" fill="#00ff00" shape-rendering="crispEdges"/><rect x="1288" y="577" width="8" height="8" fill="#00ff00" shape-rendering="crispEdges"/><rect x="1362" y="576" width="8" height="8" fill="#00ff00" shape-rendering="crispEdges"/><rect x="1437" y="574" width="8" height="8" fill="#00ff00" shape-rendering="crispEdges"/><rect x="1512" y="575" width="8" height="8" fill="#00ff00" shape-rendering="crispEdges"/><rect x="1587" y="574" width="8" height="8" fill="#00ff00" shape-rendering="crispEdges"/><rect x="1661" y="574" width="8" height="8" fill="#00ff00" shape-rendering="crispEdges"/><rect x="1736" y="573" width="8" height="8" fill="#00ff00" shape-rendering="crispEdges"/><rect x="1811" y="575" width="8" height="8" fill="#00ff00" shape-rendering="crispEdges"/><rect x="1884" y="573" width="8" height="8" fill="#00ff00" shape-rendering="crispEdges"/><polyline points="469.0,590.7 544.0,623.0 619.0,615.0 694.0,599.0 768.0,609.0 843.0,607.0 917.7,599.7 992.7,599.7 1067.0,595.7 1142.0,596.7 1216.7,592.7 1291.7,591.7 1365.7,590.7 1441.0,589.0 1515.7,589.0 1590.7,589.7 1664.7,589.0 1740.0,588.0 1815.0,589.0 1888.3,588.0" fill="none" stroke="#0000ff" stroke-width="2" shape-rendering="crispEdges"/><rect x="465" y="587" width="8" height="8" fill="#0000ff" shape-rendering="crispEdges"/><rect x="540" y="619" width="8" height="8" fill="#0000ff" shape-rendering="crispEdges"/><rect x="615" y="611" width="8" height="8" fill="#0000ff" shape-rendering="crispEdges"/><rect x="690" y="595" width="8" height="8" fill="#0000ff" shape-rendering="crispEdges"/><rect x="764" y="605" width="8" height="8" fill="#0000ff" shape-rendering="crispEdges"/><rect x="839" y="603" width="8" height="8" fill="#0000ff" shape-rendering="crispEdges"/><rect x="914" y="596" width="8" height="8" fill="#0000ff" shape-rendering="crispEdges"/><rect x="989" y="596" width="8" height="8" fill="#0000ff" shape-rendering="crispEdges"/><rect x="1063" y="592" width="8" height="8" fill="#0000ff" shape-rendering="crispEdges"/><rect x="1138" y="593" width="8" height="8" fill="#0000ff" shape-rendering="crispEdges"/><rect x="1213" y="589" width="8" height="8" fill="#0000ff" shape-rendering="crispEdges"/><rect x="1288" y="588" width="8" height="8" fill="#0000ff" shape-rendering="crispEdges"/><rect x="1362" y="587" width="8" height="8" fill="#0000ff" shape-rendering="crispEdges"/><rect x="1437" y="585" width="8" height="8" fill="#0000ff" shape-rendering="crispEdges"/><rect x="1512" y="585" width="8" height="8" fill="#0000ff" shape-rendering="crispEdges"/><rect x="1587" y="586" width="8" height="8" fill="#0000ff" shape-rendering="crispEdges"/><rect x="1661" y="585" width="8" height="8" fill="#0000ff" shape-rendering="crispEdges"/><rect x="1736" y="584" width="8" height="8" fill="#0000ff" shape-rendering="crispEdges"/><rect x="1811" y="585" width="8" height="8" fill="#0000ff" shape-rendering="crispEdges"/><rect x="1884" y="584" width="8" height="8" fill="#0000ff" shape-rendering="crispEdges"/><polyline points="469.0,997.0 544.0,985.0 619.0,970.0 694.0,971.7 768.0,953.0 843.0,943.7 917.7,943.0 992.7,936.0 1067.0,928.0 1142.0,921.0 1216.7,923.0 1291.7,915.0 1365.7,910.0 1441.0,907.7 1515.7,906.0 1590.7,897.7 1664.7,895.0 1740.0,883.7 1815.0,887.0 1888.3,864.0" fill="none" stroke="#ff00ff" stroke-width="2" shape-rendering="crispEdges"/><rect x="465" y="993" width="8" height="8" fill="#ff00ff" shape-rendering="crispEdges"/><rect x="540" y="981" width="8" height="8" fill="#ff00ff" shape-rendering="crispEdges"/><rect x="615" y="966" width="8" height="8" fill="#ff00ff" shape-rendering="crispEdges"/><rect x="690" y="968" width="8" height="8" fill="#ff00ff" shape-rendering="crispEdges"/><rect x="764" y="949" width="8" height="8" fill="#ff00ff" shape-rendering="crispEdges"/><rect x="839" y="940" width="8" height="8" fill="#ff00ff" shape-rendering="crispEdges"/><rect x="914" y="939" width="8" height="8" fill="#ff00ff" shape-rendering="crispEdges"/><rect x="989" y="932" width="8" height="8" fill="#ff00ff" shape-rendering="crispEdges"/><rect x="1063" y="924" width="8" height="8" fill="#ff00ff" shape-rendering="crispEdges"/><rect x="1138" y="917" width="8" height="8" fill="#ff00ff" shape-rendering="crispEdges"/><rect x="1213" y="919" width="8" height="8" fill="#ff00ff" shape-rendering="crispEdges"/><rect x="1288" y="911" width="8" height="8" fill="#ff00ff" shape-rendering="crispEdges"/><rect x="1362" y="906" width="8" height="8" fill="#ff00ff" shape-rendering="crispEdges"/><rect x="1437" y="904" width="8" height="8" fill="#ff00ff" shape-rendering="crispEdges"/><rect x="1512" y="902" width="8" height="8" fill="#ff00ff" shape-rendering="crispEdges"/><rect x="1587" y="894" width="8" height="8" fill="#ff00ff" shape-rendering="crispEdges"/><rect x="1661" y="891" width="8" height="8" fill="#ff00ff" shape-rendering="crispEdges"/><rect x="1736" y="880" width="8" height="8" fill="#ff00ff" shape-rendering="crispEdges"/><rect x="1811" y="883" width="8" height="8" fill="#ff00ff" shape-rendering="crispEdges"/><rect x="1884" y="860" width="8" height="8" fill="#ff00ff" shape-rendering="crispEdges"/></svg>
<div class="t" style="left:404px;top:456px;font-family:'Liberation Serif',serif;font-size:13.5px;color:#dcdcdc">140%</div>
<div class="t" style="left:404px;top:484px;font-family:'Liberation Serif',serif;font-size:13.5px;color:#dcdcdc">130%</div>
<div class="t" style="left:404px;top:512px;font-family:'Liberation Serif',serif;font-size:13.5px;color:#dcdcdc">120%</div>
<div class="t" style="left:404px;top:540px;font-family:'Liberation Serif',serif;font-size:13.5px;color:#dcdcdc">110%</div>
<div class="t" style="left:404px;top:568px;font-family:'Liberation Serif',serif;font-size:13.5px;color:#dcdcdc">100%</div>
<div class="t" style="left:404px;top:596px;font-family:'Liberation Serif',serif;font-size:13.5px;color:#dcdcdc">90%</div>
<div class="t" style="left:404px;top:624px;font-family:'Liberation Serif',serif;font-size:13.5px;color:#dcdcdc">80%</div>
<div class="t" style="left:404px;top:652px;font-family:'Liberation Serif',serif;font-size:13.5px;color:#dcdcdc">70%</div>
<div class="t" style="left:404px;top:680px;font-family:'Liberation Serif',serif;font-size:13.5px;color:#dcdcdc">60%</div>
<div class="t" style="left:404px;top:765px;font-family:'Liberation Serif',serif;font-size:13.5px;color:#dcdcdc">8</div>
<div class="t" style="left:404px;top:821px;font-family:'Liberation Serif',serif;font-size:13.5px;color:#dcdcdc">6</div>
<div class="t" style="left:404px;top:877px;font-family:'Liberation Serif',serif;font-size:13.5px;color:#dcdcdc">4</div>
<div class="t" style="left:404px;top:933px;font-family:'Liberation Serif',serif;font-size:13.5px;color:#dcdcdc">2</div>
<div class="t" style="left:553px;top:709px;font-family:'Liberation Serif',serif;font-size:13.5px;color:#e6e6e6">10% White</div>
<div class="t" style="left:553px;top:990px;font-family:'Liberation Serif',serif;font-size:13.5px;color:#e6e6e6">10% White</div>
<div class="t" style="left:702px;top:709px;font-family:'Liberation Serif',serif;font-size:13.5px;color:#d2d2d2">20% White</div>
<div class="t" style="left:702px;top:990px;font-family:'Liberation Serif',serif;font-size:13.5px;color:#d2d2d2">20% White</div>
<div class="t" style="left:851px;top:709px;font-family:'Liberation Serif',serif;font-size:13.5px;color:#b4b4b4">30% White</div>
<div class="t" style="left:851px;top:990px;font-family:'Liberation Serif',serif;font-size:13.5px;color:#b4b4b4">30% White</div>
<div class="t" style="left:1000px;top:709px;font-family:'Liberation Serif',serif;font-size:13.5px;color:#969696">40% White</div>
<div class="t" style="left:1000px;top:990px;font-family:'Liberation Serif',serif;font-size:13.5px;color:#969696">40% White</div>
<div class="t" style="left:1149px;top:709px;font-family:'Liberation Serif',serif;font-size:13.5px;color:#a8a8a8">50% White</div>
<div class="t" style="left:1149px;top:990px;font-family:'Liberation Serif',serif;font-size:13.5px;color:#a8a8a8">50% White</div>
<div class="t" style="left:1297px;top:709px;font-family:'Liberation Serif',serif;font-size:13.5px;color:#6e6e6e">60% White</div>
<div class="t" style="left:1297px;top:990px;font-family:'Liberation Serif',serif;font-size:13.5px;color:#6e6e6e">60% White</div>
<div class="t" style="left:1446px;top:709px;font-family:'Liberation Serif',serif;font-size:13.5px;color:#505050">70% White</div>
<div class="t" style="left:1446px;top:990px;font-family:'Liberation Serif',serif;font-size:13.5px;color:#505050">70% White</div>
<div class="t" style="left:1595px;top:709px;font-family:'Liberation Serif',serif;font-size:13.5px;color:#3c3c3c">80% White</div>
<div class="t" style="left:1595px;top:990px;font-family:'Liberation Serif',serif;font-size:13.5px;color:#3c3c3c">80% White</div>
<div class="t" style="left:1744px;top:709px;font-family:'Liberation Serif',serif;font-size:13.5px;color:#2d2d2d">90% White</div>
<div class="t" style="left:1744px;top:990px;font-family:'Liberation Serif',serif;font-size:13.5px;color:#2d2d2d">90% White</div>
<div class="t" style="left:1055px;top:445px;font-weight:bold;font-size:14.4px;color:#dcdc00">Gray Scale Balance w/gamma</div>
<div class="t" style="left:1725px;top:950px;font-weight:bold;font-size:16px;color:#a0a0a0">hcfr.sourceforge.net</div>
<div class="a" style="left:6px;top:1014px;width:376px;height:1px;background:#c4c4c4"></div>
<div class="a" style="left:6px;top:1015px;width:377px;height:1px;background:#a0a0a0"></div>
<div class="a" style="left:392px;top:1014px;width:1502px;height:1px;background:#c4c4c4"></div>
<div class="a" style="left:392px;top:1015px;width:1503px;height:1px;background:#a0a0a0"></div>
<div class="a" style="left:0px;top:1042px;width:1920px;height:20px;background:#f0f0f0"></div>
<div class="a" style="left:0px;top:1042px;width:56px;height:1px;background:#000"></div>
<div class="a" style="left:127px;top:1042px;width:1793px;height:1px;background:#000"></div>
<div class="a" style="left:0px;top:1043px;width:54px;height:18px;background:#000"></div>
<div class="a" style="left:1px;top:1043px;width:17px;height:17px;background:#f0f0f0;border:1px solid #fff;border-right-color:#8a8a8a;border-bottom-color:#8a8a8a"></div>
<div class="a" style="left:18px;top:1043px;width:17px;height:17px;background:#f0f0f0;border:1px solid #fff;border-right-color:#8a8a8a;border-bottom-color:#8a8a8a"></div>
<div class="a" style="left:35px;top:1043px;width:18px;height:17px;background:#f0f0f0;border:1px solid #fff;border-right-color:#8a8a8a;border-bottom-color:#8a8a8a"></div>
<svg class="a" style="left:0;top:1042px" width="56" height="20" viewBox="0 0 56 20"><path d="M6 5.500l7 7M13 5.500l-7 7" stroke="#000" stroke-width="1.300"/><path d="M28.500 6v7l-4-3.500z" fill="#000"/><path d="M41.500 6v7l4-3.500z" fill="#000"/></svg>
<svg class="a" style="left:54px;top:1042px" width="280" height="20" viewBox="54 1042 280 20"><path d="M55 1042 L62.500 1060.500 L119 1060.500 L128 1042z" fill="#fff"/><path d="M55 1042 L62.500 1060.500 L119 1060.500 L128 1042.500" fill="none" stroke="#000" stroke-width="1"/><path d="M122 1053 L127 1060.500 L187 1060.500 L190 1054" fill="none" stroke="#000" stroke-width="1"/><path d="M186.500 1042.500 L194.500 1060.500 L240 1060.500 L243 1054" fill="none" stroke="#000" stroke-width="1"/><path d="M239.500 1042.500 L247.500 1060.500 L313 1060.500 L322 1042.500" fill="none" stroke="#000" stroke-width="1"/></svg>
<div class="t" style="left:67px;top:1047px;font-weight:bold;font-size:10px;letter-spacing:0.35px">Measures</div>
<div class="t" style="left:134px;top:1047px;font-size:10px;letter-spacing:-0.4px">Luminance</div>
<div class="t" style="left:200px;top:1047px;font-size:10px;letter-spacing:-0.3px">Gamma</div>
<div class="t" style="left:255px;top:1047px;font-size:10px;letter-spacing:-0.3px">RGB Levels</div>
<svg class="a" style="left:1750px;top:1044px" width="16" height="14" viewBox="0 0 16 14"><path d="M1 0.500h14v7l-1.500 5.500h-3.500l-1.500-3-1.500 3h-3.500L1 7.500z" fill="#6e6e00" stroke="#000" stroke-width="1"/><rect x="4" y="2" width="8" height="5" fill="#f4f4f4"/><path d="M5 3h4v3h-3z" fill="#e00000"/><rect x="9" y="9" width="5" height="3.500" fill="#ffff00"/></svg>
<div class="a" style="left:1846px;top:1044px;width:12px;height:12px;background:#fff;border:1px solid #6a6a6a;border-right-color:#e8e8e8;border-bottom-color:#e8e8e8;box-shadow:inset 1px 1px 0 #a0a0a0"></div>
<div class="t" style="left:1864px;top:1046px;font-size:11px;letter-spacing:-0.1px">Reference</div>
<div class="a" style="left:0px;top:1061px;width:1920px;height:17px;background:#eaeff8"></div>
<div class="t ui" style="left:3px;top:1065px;letter-spacing:-0.6px">Ready</div>
<div class="a" style="left:1742px;top:1062px;width:76px;height:16px;border:1px solid #a9bfde;border-bottom:none"></div>
<div class="a" style="left:1820px;top:1062px;width:29px;height:16px;border:1px solid #a9bfde;border-bottom:none"></div>
<div class="a" style="left:1851px;top:1062px;width:34px;height:16px;border:1px solid #a9bfde;border-bottom:none"></div>
<div class="a" style="left:1887px;top:1062px;width:32px;height:16px;border:1px solid #a9bfde;border-bottom:none"></div>
<div class="t ui" style="left:1854px;top:1066px;letter-spacing:-0.3px">NUM</div>
<div class="a" style="left:0px;top:1078px;width:1920px;height:2px;background:#1c1c1c"></div>
</body></html>
